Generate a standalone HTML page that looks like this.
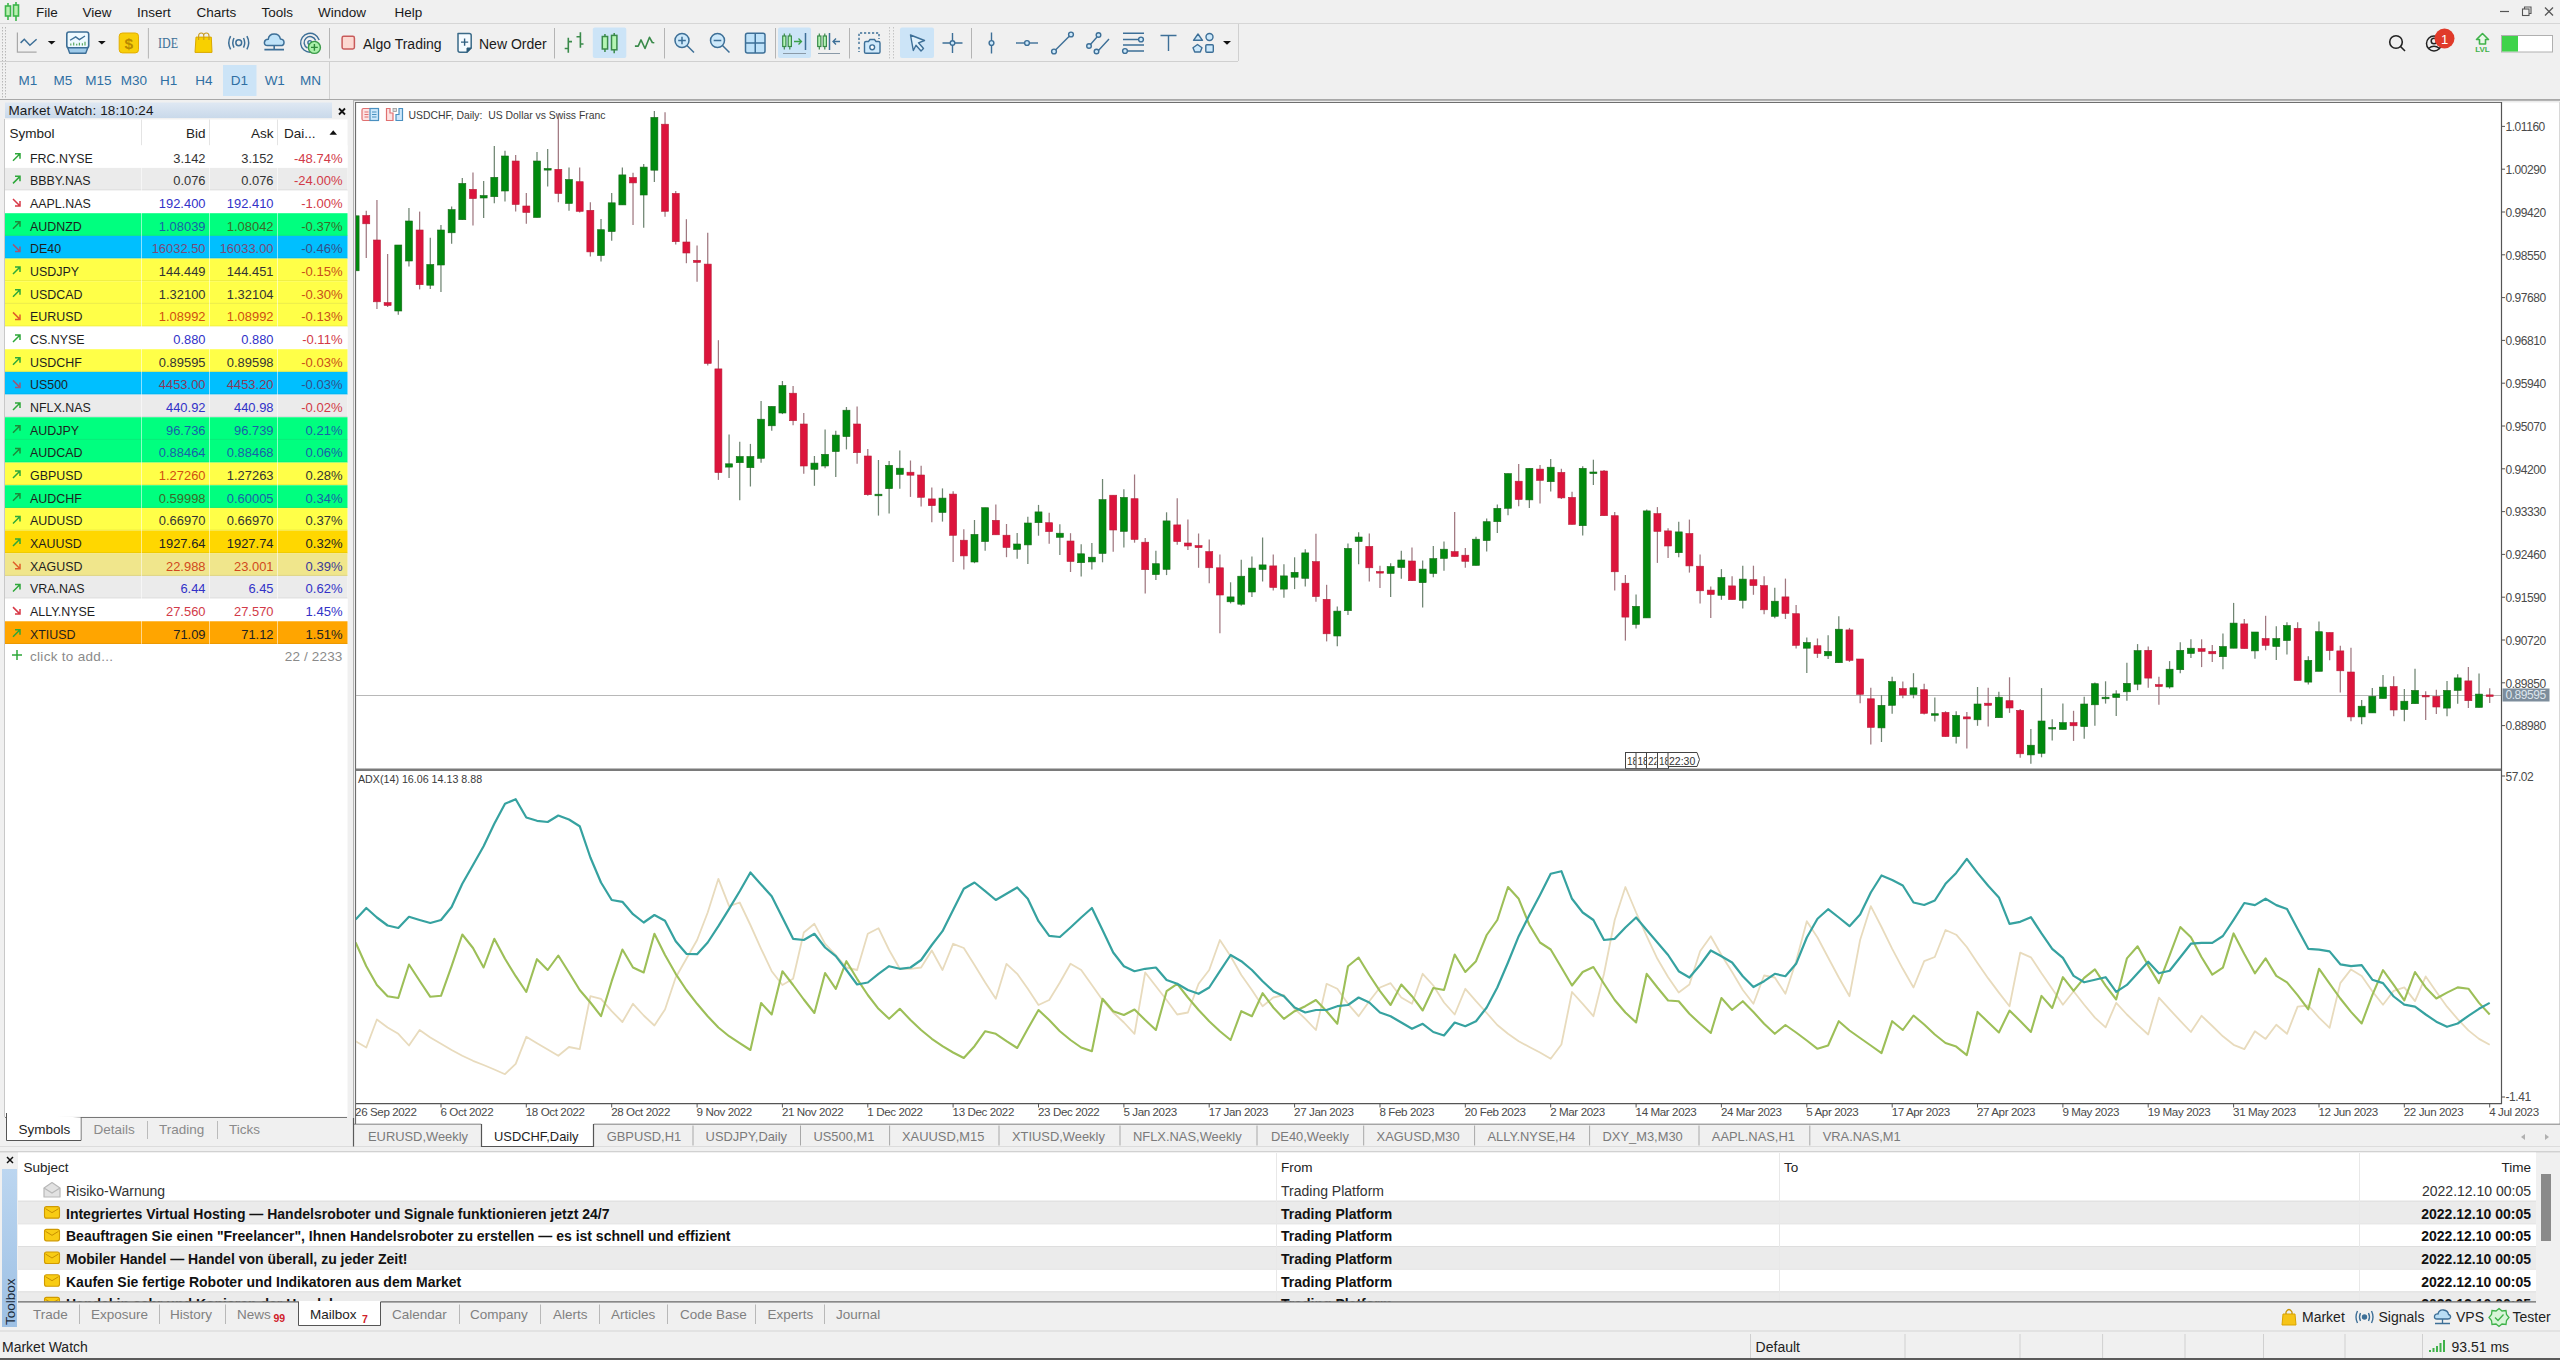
<!DOCTYPE html>
<html><head><meta charset="utf-8"><title>MetaTrader 5</title>
<style>html,body{margin:0;padding:0;background:#f0f0f0;overflow:hidden}svg{display:block}text{font-family:"Liberation Sans",sans-serif}</style>
</head><body><svg width="2560" height="1360" viewBox="0 0 2560 1360" font-family="Liberation Sans, sans-serif"><rect x="0" y="0" width="2560" height="1360" fill="#f0f0f0" /><g stroke="#3cb54a" stroke-width="1.6" fill="#b8f0b0"><line x1="8" y1="3" x2="8" y2="20"/><rect x="5.5" y="6" width="5" height="10"/><line x1="16" y1="2" x2="16" y2="21"/><rect x="13.5" y="5" width="5" height="11"/></g><text x="36" y="16.5" font-size="13.5" fill="#1a1a1a" text-anchor="start" font-weight="normal" >File</text><text x="82.5" y="16.5" font-size="13.5" fill="#1a1a1a" text-anchor="start" font-weight="normal" >View</text><text x="137" y="16.5" font-size="13.5" fill="#1a1a1a" text-anchor="start" font-weight="normal" >Insert</text><text x="196.5" y="16.5" font-size="13.5" fill="#1a1a1a" text-anchor="start" font-weight="normal" >Charts</text><text x="261.5" y="16.5" font-size="13.5" fill="#1a1a1a" text-anchor="start" font-weight="normal" >Tools</text><text x="318" y="16.5" font-size="13.5" fill="#1a1a1a" text-anchor="start" font-weight="normal" >Window</text><text x="394.5" y="16.5" font-size="13.5" fill="#1a1a1a" text-anchor="start" font-weight="normal" >Help</text><line x1="2500" y1="11.5" x2="2509" y2="11.5" stroke="#555" stroke-width="1.2" /><g fill="none" stroke="#555" stroke-width="1.1"><rect x="2522.5" y="9" width="6.5" height="6.5"/><path d="M2524.5 9 V7 H2531 V13.5 H2529"/></g><g stroke="#555" stroke-width="1.2"><line x1="2545" y1="7.5" x2="2553" y2="15.5"/><line x1="2553" y1="7.5" x2="2545" y2="15.5"/></g><line x1="0" y1="23.5" x2="2560" y2="23.5" stroke="#d6d6d6" stroke-width="1" /><rect x="2" y="27" width="1" height="1.5" fill="#b8b8b8" /><rect x="5" y="27" width="1" height="1.5" fill="#b8b8b8" /><rect x="2" y="30" width="1" height="1.5" fill="#b8b8b8" /><rect x="5" y="30" width="1" height="1.5" fill="#b8b8b8" /><rect x="2" y="33" width="1" height="1.5" fill="#b8b8b8" /><rect x="5" y="33" width="1" height="1.5" fill="#b8b8b8" /><rect x="2" y="36" width="1" height="1.5" fill="#b8b8b8" /><rect x="5" y="36" width="1" height="1.5" fill="#b8b8b8" /><rect x="2" y="39" width="1" height="1.5" fill="#b8b8b8" /><rect x="5" y="39" width="1" height="1.5" fill="#b8b8b8" /><rect x="2" y="42" width="1" height="1.5" fill="#b8b8b8" /><rect x="5" y="42" width="1" height="1.5" fill="#b8b8b8" /><rect x="2" y="45" width="1" height="1.5" fill="#b8b8b8" /><rect x="5" y="45" width="1" height="1.5" fill="#b8b8b8" /><rect x="2" y="48" width="1" height="1.5" fill="#b8b8b8" /><rect x="5" y="48" width="1" height="1.5" fill="#b8b8b8" /><rect x="2" y="51" width="1" height="1.5" fill="#b8b8b8" /><rect x="5" y="51" width="1" height="1.5" fill="#b8b8b8" /><rect x="2" y="54" width="1" height="1.5" fill="#b8b8b8" /><rect x="5" y="54" width="1" height="1.5" fill="#b8b8b8" /><rect x="2" y="57" width="1" height="1.5" fill="#b8b8b8" /><rect x="5" y="57" width="1" height="1.5" fill="#b8b8b8" /><rect x="2" y="60" width="1" height="1.5" fill="#b8b8b8" /><rect x="5" y="60" width="1" height="1.5" fill="#b8b8b8" /><rect x="2" y="63" width="1" height="1.5" fill="#b8b8b8" /><rect x="5" y="63" width="1" height="1.5" fill="#b8b8b8" /><rect x="2" y="66" width="1" height="1.5" fill="#b8b8b8" /><rect x="5" y="66" width="1" height="1.5" fill="#b8b8b8" /><rect x="2" y="69" width="1" height="1.5" fill="#b8b8b8" /><rect x="5" y="69" width="1" height="1.5" fill="#b8b8b8" /><rect x="2" y="72" width="1" height="1.5" fill="#b8b8b8" /><rect x="5" y="72" width="1" height="1.5" fill="#b8b8b8" /><rect x="2" y="75" width="1" height="1.5" fill="#b8b8b8" /><rect x="5" y="75" width="1" height="1.5" fill="#b8b8b8" /><rect x="2" y="78" width="1" height="1.5" fill="#b8b8b8" /><rect x="5" y="78" width="1" height="1.5" fill="#b8b8b8" /><rect x="2" y="81" width="1" height="1.5" fill="#b8b8b8" /><rect x="5" y="81" width="1" height="1.5" fill="#b8b8b8" /><rect x="2" y="84" width="1" height="1.5" fill="#b8b8b8" /><rect x="5" y="84" width="1" height="1.5" fill="#b8b8b8" /><rect x="2" y="87" width="1" height="1.5" fill="#b8b8b8" /><rect x="5" y="87" width="1" height="1.5" fill="#b8b8b8" /><rect x="2" y="90" width="1" height="1.5" fill="#b8b8b8" /><rect x="5" y="90" width="1" height="1.5" fill="#b8b8b8" /><rect x="2" y="93" width="1" height="1.5" fill="#b8b8b8" /><rect x="5" y="93" width="1" height="1.5" fill="#b8b8b8" /><rect x="2" y="96" width="1" height="1.5" fill="#b8b8b8" /><rect x="5" y="96" width="1" height="1.5" fill="#b8b8b8" /><line x1="0" y1="61.5" x2="1238" y2="61.5" stroke="#d0d0d0" stroke-width="1" /><line x1="1238.5" y1="24" x2="1238.5" y2="61" stroke="#d0d0d0" stroke-width="1" /><path d="M17.4 32.6 V52.2 H36.6" fill="none" stroke="#a8a8a8" stroke-width="1.2"/><path d="M20.6 42.9 L24.3 39.3 L29.9 45.2 L36.6 39.3" fill="none" stroke="#3d6f97" stroke-width="1.5"/><path d="M47.8 40.9 L55.5 40.9 L51.65 44.4 Z" fill="#111"/><rect x="66.8" y="32" width="21.9" height="15.9" rx="2.2" fill="#eefaff" stroke="#3d6f97" stroke-width="1.6"/><path d="M67.8 47.9 H87.7 L85.8 53.2 H69.7 Z" fill="#9fcbea" stroke="#3d6f97" stroke-width="1.4" stroke-linejoin="round"/><path d="M70.1 40.3 L75.7 36.9 L79.4 39.6 L85 36" fill="none" stroke="#3d6f97" stroke-width="1.3"/><g stroke="#5aa860" stroke-width="1.2"><line x1="70.8" y1="43.5" x2="70.8" y2="45.6"/><line x1="73.7" y1="42.5" x2="73.7" y2="45.6"/><line x1="76.7" y1="43.8" x2="76.7" y2="45.6"/><line x1="79.4" y1="42.8" x2="79.4" y2="45.6"/><line x1="82.4" y1="43.2" x2="82.4" y2="45.6"/><line x1="85" y1="41.8" x2="85" y2="45.6"/></g><path d="M98 40.9 L105.7 40.9 L101.85 44.4 Z" fill="#111"/><rect x="119.2" y="33" width="19.3" height="19.9" rx="3.2" fill="#f8cf0a" stroke="#e3ad00" stroke-width="1"/><text x="128.85" y="48.6" font-size="15.5" fill="#b88a00" text-anchor="middle" font-weight="bold" >$</text><line x1="148.4" y1="28" x2="148.4" y2="58.5" stroke="#b4b4b4" stroke-width="1" /><text x="158" y="47.9" font-size="14.5" fill="#3d6f97" text-anchor="start" font-weight="normal" style="font-family:Liberation Serif" textLength="20" lengthAdjust="spacingAndGlyphs">IDE</text><path d="M196 37.1 H211.3 L212 52.4 H195 Z" fill="#f8d000" stroke="#d9a800" stroke-width="1" stroke-linejoin="round"/><path d="M198.6 40 V36 Q198.6 33 201.3 33 Q203.8 33 203.8 36 V40 M203.6 36 Q203.6 33 206.3 33 Q209 33 209 36 V40" fill="none" stroke="#c89a20" stroke-width="1.1"/><g fill="none" stroke="#3d6f97" stroke-width="1.5"><circle cx="238.75" cy="42.75" r="2.9"/><path d="M234 38 Q231.6 42.75 234 47.6"/><path d="M243.5 38 Q245.9 42.75 243.5 47.6"/><path d="M230.6 36.2 Q227 42.75 230.6 49.4"/><path d="M246.9 36.2 Q250.5 42.75 246.9 49.4"/></g><path d="M267.5 45.6 Q264.2 45.6 264.4 42.4 Q264.8 39.3 268.2 39.3 Q269 34 274.2 34 Q279.6 34 280.4 39 Q284 39.3 284 42.4 Q284 45.6 280.6 45.6 Z" fill="#bfe3f9" stroke="#3d6f97" stroke-width="1.5" stroke-linejoin="round"/><path d="M274.2 45.6 V49.6 M264.4 49.6 H284" fill="none" stroke="#3d6f97" stroke-width="1.6"/><g fill="none" stroke="#3d6f97" stroke-width="1.4"><path d="M319.2 40 A9.5 9.5 0 1 0 310.5 52.3"/><path d="M315.7 40.5 A6 6 0 1 0 307.5 48"/><circle cx="309.8" cy="42.5" r="1.9" fill="#cde9fb"/></g><circle cx="314.4" cy="47.4" r="6" fill="#aaf0aa" stroke="#3a9a48" stroke-width="1.4"/><path d="M314.4 44 V50.8 M311 47.4 H317.8" stroke="#2e8a3a" stroke-width="1.4"/><line x1="329.5" y1="28" x2="329.5" y2="58.5" stroke="#b4b4b4" stroke-width="1" /><rect x="342.1" y="36.3" width="12.3" height="12.6" rx="1.6" fill="#fcd9d2" stroke="#c85a5a" stroke-width="1.5"/><text x="363" y="49" font-size="14" fill="#1a1a1a" text-anchor="start" font-weight="normal" >Algo Trading</text><path d="M458 33.5 H469.2 Q471.2 33.5 471.2 35.5 V48 L467 52.2 H460 Q458 52.2 458 50.2 Z" fill="#f5fbff" stroke="#3a6a88" stroke-width="1.5" stroke-linejoin="round"/><path d="M471.2 48 L467 52.2 V48 Z" fill="#2a5a78" stroke="#2a5a78" stroke-width="1"/><path d="M464.6 38.5 V45.8 M461 42.1 H468.2" stroke="#2f5f80" stroke-width="1.4"/><text x="479" y="49" font-size="14" fill="#1a1a1a" text-anchor="start" font-weight="normal" >New Order</text><line x1="554.5" y1="28" x2="554.5" y2="58.5" stroke="#b4b4b4" stroke-width="1" /><g fill="none" stroke="#3a8a4a" stroke-width="1.6"><path d="M568.3 37.7 V52.8 M564.7 48.5 H568.3 M568.3 41.6 H572"/><path d="M580.4 32.2 V47.7 M576.5 36.7 H580.4 M580.4 44 H583.5"/></g><rect x="592.8" y="27.4" width="33.5" height="30.6" rx="2" fill="#cce4f7"/><g stroke="#3a8a4a" stroke-width="1.5"><line x1="604.95" y1="34" x2="604.95" y2="52"/><line x1="614.2" y1="33" x2="614.2" y2="53.2"/><rect x="602.3" y="36.5" width="5.3" height="12.5" fill="#b4f5b4"/><rect x="611.5" y="35.4" width="5.4" height="14.4" fill="#b4f5b4"/></g><path d="M634.9 46.1 L638.2 46.1 L641 39.9 L645 48.5 L649.5 37.3 L652.3 42.5 L654.3 42.7" fill="none" stroke="#3a8a4a" stroke-width="1.6" stroke-linejoin="round"/><line x1="664.5" y1="28" x2="664.5" y2="58.5" stroke="#b4b4b4" stroke-width="1" /><g stroke="#3d6f97" stroke-width="1.5"><circle cx="682" cy="40.5" r="7" fill="#cde9fb"/><path d="M687 45.5 L694 52.5" fill="none"/><path d="M678.2 40.5 H685.8 M682 36.7 V44.3" fill="none"/></g><g stroke="#3d6f97" stroke-width="1.5"><circle cx="717.5" cy="40.5" r="7" fill="#cde9fb"/><path d="M722.5 45.5 L729.5 52.5" fill="none"/><path d="M713.7 40.5 H721.3" fill="none"/></g><g stroke="#3d6f97" stroke-width="1.5"><rect x="745.5" y="33.3" width="19.5" height="19.7" rx="2" fill="#bfe2f9"/><path d="M755.25 33.3 V53 M745.5 43 H765" fill="none"/></g><line x1="775.5" y1="28" x2="775.5" y2="58.5" stroke="#b4b4b4" stroke-width="1" /><rect x="778" y="27.4" width="33" height="30.6" rx="2" fill="#cce4f7"/><g stroke="#3a8a4a" stroke-width="1.2"><line x1="784.3" y1="33.5" x2="784.3" y2="49.5"/><rect x="782.7" y="36" width="3.2" height="10.5" fill="#b4f5b4"/><line x1="789.8" y1="33.5" x2="789.8" y2="49.5"/><rect x="788.2" y="36" width="3.2" height="10.5" fill="#b4f5b4"/></g><g fill="none" stroke="#3aa048" stroke-width="1.3"><path d="M794 41.5 H801.5 M798.5 38.5 L801.5 41.5 L798.5 44.5"/></g><line x1="805.5" y1="33" x2="805.5" y2="50" stroke="#3d6f97" stroke-width="1.5"/><line x1="783" y1="53.5" x2="806" y2="53.5" stroke="#8a9aa8" stroke-width="1"/><g stroke="#3a8a4a" stroke-width="1.2"><line x1="819.3" y1="33.5" x2="819.3" y2="49.5"/><rect x="817.7" y="36" width="3.2" height="10.5" fill="#b4f5b4"/><line x1="824.8" y1="33.5" x2="824.8" y2="49.5"/><rect x="823.2" y="36" width="3.2" height="10.5" fill="#b4f5b4"/></g><line x1="829.5" y1="33" x2="829.5" y2="50" stroke="#3d6f97" stroke-width="1.5"/><path d="M840 41.5 H833 M836 38.5 L833 41.5 L836 44.5" fill="none" stroke="#3d6f97" stroke-width="1.3"/><line x1="818" y1="53.5" x2="840" y2="53.5" stroke="#8a9aa8" stroke-width="1"/><line x1="849.5" y1="28" x2="849.5" y2="58.5" stroke="#b4b4b4" stroke-width="1" /><g fill="none" stroke="#3d6f97" stroke-width="1.4"><path d="M859 44 V33 H879 V39" stroke-dasharray="2.2 1.8"/><path d="M859 47 V52" stroke-dasharray="2.2 1.8"/></g><path d="M864.5 43 Q864.5 41.5 866 41.5 H868.5 L870 39.5 H874.5 L876 41.5 H878.5 Q880 41.5 880 43 V52 Q880 53.3 878.5 53.3 H866 Q864.5 53.3 864.5 52 Z" fill="#cfe9fb" stroke="#3d6f97" stroke-width="1.4"/><circle cx="872.2" cy="47.3" r="2.4" fill="#fff" stroke="#3d6f97" stroke-width="1.4"/><rect x="889" y="27" width="1" height="1.5" fill="#c4c4c4" /><rect x="893" y="27" width="1" height="1.5" fill="#c4c4c4" /><rect x="889" y="30" width="1" height="1.5" fill="#c4c4c4" /><rect x="893" y="30" width="1" height="1.5" fill="#c4c4c4" /><rect x="889" y="33" width="1" height="1.5" fill="#c4c4c4" /><rect x="893" y="33" width="1" height="1.5" fill="#c4c4c4" /><rect x="889" y="36" width="1" height="1.5" fill="#c4c4c4" /><rect x="893" y="36" width="1" height="1.5" fill="#c4c4c4" /><rect x="889" y="39" width="1" height="1.5" fill="#c4c4c4" /><rect x="893" y="39" width="1" height="1.5" fill="#c4c4c4" /><rect x="889" y="42" width="1" height="1.5" fill="#c4c4c4" /><rect x="893" y="42" width="1" height="1.5" fill="#c4c4c4" /><rect x="889" y="45" width="1" height="1.5" fill="#c4c4c4" /><rect x="893" y="45" width="1" height="1.5" fill="#c4c4c4" /><rect x="889" y="48" width="1" height="1.5" fill="#c4c4c4" /><rect x="893" y="48" width="1" height="1.5" fill="#c4c4c4" /><rect x="889" y="51" width="1" height="1.5" fill="#c4c4c4" /><rect x="893" y="51" width="1" height="1.5" fill="#c4c4c4" /><rect x="889" y="54" width="1" height="1.5" fill="#c4c4c4" /><rect x="893" y="54" width="1" height="1.5" fill="#c4c4c4" /><rect x="889" y="57" width="1" height="1.5" fill="#c4c4c4" /><rect x="893" y="57" width="1" height="1.5" fill="#c4c4c4" /><rect x="900" y="27.4" width="34" height="30.6" rx="2" fill="#cce4f7"/><path d="M910.5 35 L924.5 40.5 L918.5 42.8 L923.5 48.5 L921 51 L916 45.3 L913.3 50.5 Z" fill="#dff0fb" stroke="#3d6f97" stroke-width="1.4" stroke-linejoin="round"/><g stroke="#3d6f97" stroke-width="1.4"><path d="M952.5 33 V53 M942.5 43 H962.5" fill="none"/><circle cx="952.5" cy="43" r="2.3" fill="#cde9fb"/></g><line x1="971.5" y1="28" x2="971.5" y2="58.5" stroke="#b4b4b4" stroke-width="1" /><g stroke="#3d6f97" stroke-width="1.4"><path d="M991.5 32.5 V53.5" fill="none"/><circle cx="991.5" cy="43" r="2.4" fill="#cde9fb"/></g><g stroke="#3d6f97" stroke-width="1.4"><path d="M1016 43 H1038" fill="none"/><circle cx="1027" cy="43" r="2.4" fill="#cde9fb"/></g><g stroke="#3d6f97" stroke-width="1.4"><path d="M1055 50.5 L1069.5 36" fill="none"/><circle cx="1054" cy="51.5" r="2.4" fill="#cde9fb"/><circle cx="1071" cy="34.5" r="2.4" fill="#cde9fb"/></g><g stroke="#3d6f97" stroke-width="1.4"><path d="M1090 45 L1097 37 M1098 51 L1109 39" fill="none"/><circle cx="1089" cy="46" r="2.3" fill="#cde9fb"/><circle cx="1098.5" cy="35" r="2.3" fill="#cde9fb"/><circle cx="1096.5" cy="51.5" r="2.3" fill="#cde9fb"/></g><g stroke="#3d6f97" stroke-width="1.4"><path d="M1123 33.3 H1144 M1123 39.5 H1139 M1123 45 H1144 M1127 51 H1144" fill="none"/><circle cx="1141" cy="39.5" r="2.4" fill="#cde9fb"/><circle cx="1125" cy="51" r="2.4" fill="#cde9fb"/></g><path d="M1160.5 35.5 H1176.5 M1168.5 35.5 V51" fill="none" stroke="#3d6f97" stroke-width="1.4"/><g stroke="#3d6f97" stroke-width="1.4" fill="#cde9fb" stroke-linejoin="round"><path d="M1198 34 L1202.5 40.3 H1193.5 Z"/><circle cx="1209.5" cy="37" r="3.5"/><path d="M1197.5 44.5 L1202 47.8 L1200.3 52 H1194.7 L1193 47.8 Z"/><rect x="1205.8" y="44.8" width="7.5" height="7.5" rx="1"/></g><path d="M1223 41 L1231 41 L1227 44.8 Z" fill="#111"/><g fill="none" stroke="#222" stroke-width="1.6"><circle cx="2396" cy="42" r="6.3"/><path d="M2400.5 46.5 L2405 51"/></g><g fill="none" stroke="#222" stroke-width="1.5"><circle cx="2434" cy="43.5" r="7.5"/><circle cx="2434" cy="41" r="2.8"/><path d="M2428.5 48.5 Q2434 44 2439.5 48.5"/></g><circle cx="2444.5" cy="38.5" r="10" fill="#e03a2a"/><text x="2444.5" y="44" font-size="13" fill="#fff" text-anchor="middle" font-weight="normal" >1</text><path d="M2482.5 33.5 L2488.5 39.5 H2485.5 V44 H2479.5 V39.5 H2476.5 Z" fill="#e8f8e8" stroke="#3fb24a" stroke-width="1.6" stroke-linejoin="round"/><text x="2482.5" y="52" font-size="8" fill="#3fb24a" text-anchor="middle" font-weight="bold" >LVL</text><rect x="2501.5" y="35.5" width="51" height="16.5" fill="#ffffff" stroke="#b0b0b0" stroke-width="1"/><rect x="2502" y="36" width="16" height="15.5" fill="#3fd34a" /><rect x="223" y="65" width="33.5" height="31" fill="#cce4f7" /><text x="28" y="85.3" font-size="13.5" fill="#2f6fa3" text-anchor="middle" font-weight="normal" >M1</text><text x="63" y="85.3" font-size="13.5" fill="#2f6fa3" text-anchor="middle" font-weight="normal" >M5</text><text x="98.5" y="85.3" font-size="13.5" fill="#2f6fa3" text-anchor="middle" font-weight="normal" >M15</text><text x="134" y="85.3" font-size="13.5" fill="#2f6fa3" text-anchor="middle" font-weight="normal" >M30</text><text x="168.75" y="85.3" font-size="13.5" fill="#2f6fa3" text-anchor="middle" font-weight="normal" >H1</text><text x="204" y="85.3" font-size="13.5" fill="#2f6fa3" text-anchor="middle" font-weight="normal" >H4</text><text x="239.5" y="85.3" font-size="13.5" fill="#2f6fa3" text-anchor="middle" font-weight="normal" >D1</text><text x="274.75" y="85.3" font-size="13.5" fill="#2f6fa3" text-anchor="middle" font-weight="normal" >W1</text><text x="310.5" y="85.3" font-size="13.5" fill="#2f6fa3" text-anchor="middle" font-weight="normal" >MN</text><line x1="329.5" y1="62" x2="329.5" y2="99" stroke="#d0d0d0" stroke-width="1" /><line x1="0" y1="99.5" x2="2560" y2="99.5" stroke="#a8a8a8" stroke-width="1.2" /><defs><linearGradient id="mwh" x1="0" y1="0" x2="0" y2="1"><stop offset="0" stop-color="#dfe8f3"/><stop offset="1" stop-color="#c9d9ea"/></linearGradient></defs><rect x="5" y="102.5" width="327" height="15.5" fill="url(#mwh)" /><text x="8.5" y="114.6" font-size="13.5" fill="#1a1a1a" text-anchor="start" font-weight="normal" letter-spacing="0.1" >Market Watch: 18:10:24</text><g stroke="#111" stroke-width="1.8"><line x1="339" y1="108.5" x2="345" y2="114.5"/><line x1="345" y1="108.5" x2="339" y2="114.5"/></g><rect x="5" y="119.5" width="342.5" height="997" fill="#ffffff" /><line x1="4.5" y1="119" x2="4.5" y2="1117" stroke="#c8c8c8" stroke-width="1" /><text x="9.5" y="137.8" font-size="13.5" fill="#222" text-anchor="start" font-weight="normal" >Symbol</text><text x="205.5" y="137.8" font-size="13.5" fill="#222" text-anchor="end" font-weight="normal" >Bid</text><text x="273.5" y="137.8" font-size="13.5" fill="#222" text-anchor="end" font-weight="normal" >Ask</text><text x="284" y="137.8" font-size="13.5" fill="#222" text-anchor="start" font-weight="normal" >Dai...</text><path d="M329.5 134.8 L337 134.8 L333.25 130.3 Z" fill="#111"/><rect x="5" y="145.2" width="342.5" height="22.72" fill="#ffffff" /><path d="M13 160.7 L20 153.7 M15 153.7 H20 V158.7" fill="none" stroke="#2ea83a" stroke-width="1.5"/><text x="30" y="162.7" font-size="13.5" fill="#1e1e1e" text-anchor="start" font-weight="normal" textLength="62.79" lengthAdjust="spacingAndGlyphs" >FRC.NYSE</text><text x="205.5" y="162.7" font-size="13.5" fill="#333" text-anchor="end" font-weight="normal" textLength="32.29" lengthAdjust="spacingAndGlyphs" >3.142</text><text x="273.5" y="162.7" font-size="13.5" fill="#333" text-anchor="end" font-weight="normal" textLength="32.29" lengthAdjust="spacingAndGlyphs" >3.152</text><text x="342.5" y="162.7" font-size="13.5" fill="#d23a48" text-anchor="end" font-weight="normal" textLength="48.55" lengthAdjust="spacingAndGlyphs" >-48.74%</text><rect x="5" y="167.87" width="342.5" height="22.72" fill="#ebebeb" /><line x1="5" y1="190.04" x2="347.5" y2="190.04" stroke="#000000" stroke-width="1" opacity="0.07"/><path d="M13 183.37 L20 176.37 M15 176.37 H20 V181.37" fill="none" stroke="#2ea83a" stroke-width="1.5"/><text x="30" y="185.37" font-size="13.5" fill="#1e1e1e" text-anchor="start" font-weight="normal" textLength="60.50" lengthAdjust="spacingAndGlyphs" >BBBY.NAS</text><text x="205.5" y="185.37" font-size="13.5" fill="#333" text-anchor="end" font-weight="normal" textLength="32.29" lengthAdjust="spacingAndGlyphs" >0.076</text><text x="273.5" y="185.37" font-size="13.5" fill="#333" text-anchor="end" font-weight="normal" textLength="32.29" lengthAdjust="spacingAndGlyphs" >0.076</text><text x="342.5" y="185.37" font-size="13.5" fill="#d23a48" text-anchor="end" font-weight="normal" textLength="48.55" lengthAdjust="spacingAndGlyphs" >-24.00%</text><rect x="5" y="190.54" width="342.5" height="22.72" fill="#ffffff" /><path d="M13 199.04 L20 206.04 M15 206.04 H20 V201.04" fill="none" stroke="#d83a48" stroke-width="1.5"/><text x="30" y="208.04" font-size="13.5" fill="#1e1e1e" text-anchor="start" font-weight="normal" textLength="60.73" lengthAdjust="spacingAndGlyphs" >AAPL.NAS</text><text x="205.5" y="208.04" font-size="13.5" fill="#3232c8" text-anchor="end" font-weight="normal" textLength="46.65" lengthAdjust="spacingAndGlyphs" >192.400</text><text x="273.5" y="208.04" font-size="13.5" fill="#3232c8" text-anchor="end" font-weight="normal" textLength="46.65" lengthAdjust="spacingAndGlyphs" >192.410</text><text x="342.5" y="208.04" font-size="13.5" fill="#d23a48" text-anchor="end" font-weight="normal" textLength="41.30" lengthAdjust="spacingAndGlyphs" >-1.00%</text><rect x="5" y="213.21" width="342.5" height="22.72" fill="#00ff7f" /><line x1="5" y1="235.38" x2="347.5" y2="235.38" stroke="#000000" stroke-width="1" opacity="0.07"/><path d="M13 228.70999999999998 L20 221.70999999999998 M15 221.70999999999998 H20 V226.70999999999998" fill="none" stroke="#1e8a3a" stroke-width="1.5"/><text x="30" y="230.71" font-size="13.5" fill="#1e1e1e" text-anchor="start" font-weight="normal" textLength="51.75" lengthAdjust="spacingAndGlyphs" >AUDNZD</text><text x="205.5" y="230.71" font-size="13.5" fill="#1a5fa8" text-anchor="end" font-weight="normal" textLength="46.65" lengthAdjust="spacingAndGlyphs" >1.08039</text><text x="273.5" y="230.71" font-size="13.5" fill="#3c6a28" text-anchor="end" font-weight="normal" textLength="46.65" lengthAdjust="spacingAndGlyphs" >1.08042</text><text x="342.5" y="230.71" font-size="13.5" fill="#3c6a28" text-anchor="end" font-weight="normal" textLength="41.30" lengthAdjust="spacingAndGlyphs" >-0.37%</text><rect x="5" y="235.88" width="342.5" height="22.72" fill="#00bfff" /><line x1="5" y1="258.05" x2="347.5" y2="258.05" stroke="#000000" stroke-width="1" opacity="0.07"/><path d="M13 244.38 L20 251.38 M15 251.38 H20 V246.38" fill="none" stroke="#9a5a7a" stroke-width="1.5"/><text x="30" y="253.38" font-size="13.5" fill="#1e1e1e" text-anchor="start" font-weight="normal" textLength="31.08" lengthAdjust="spacingAndGlyphs" >DE40</text><text x="205.5" y="253.38" font-size="13.5" fill="#7a4a78" text-anchor="end" font-weight="normal" textLength="53.82" lengthAdjust="spacingAndGlyphs" >16032.50</text><text x="273.5" y="253.38" font-size="13.5" fill="#7a4a78" text-anchor="end" font-weight="normal" textLength="53.82" lengthAdjust="spacingAndGlyphs" >16033.00</text><text x="342.5" y="253.38" font-size="13.5" fill="#34508a" text-anchor="end" font-weight="normal" textLength="41.30" lengthAdjust="spacingAndGlyphs" >-0.46%</text><rect x="5" y="258.55" width="342.5" height="22.72" fill="#ffff48" /><line x1="5" y1="280.72" x2="347.5" y2="280.72" stroke="#000000" stroke-width="1" opacity="0.07"/><path d="M13 274.05 L20 267.05 M15 267.05 H20 V272.05" fill="none" stroke="#2ea83a" stroke-width="1.5"/><text x="30" y="276.05" font-size="13.5" fill="#1e1e1e" text-anchor="start" font-weight="normal" textLength="48.99" lengthAdjust="spacingAndGlyphs" >USDJPY</text><text x="205.5" y="276.05" font-size="13.5" fill="#333" text-anchor="end" font-weight="normal" textLength="46.65" lengthAdjust="spacingAndGlyphs" >144.449</text><text x="273.5" y="276.05" font-size="13.5" fill="#333" text-anchor="end" font-weight="normal" textLength="46.65" lengthAdjust="spacingAndGlyphs" >144.451</text><text x="342.5" y="276.05" font-size="13.5" fill="#c8501a" text-anchor="end" font-weight="normal" textLength="41.30" lengthAdjust="spacingAndGlyphs" >-0.15%</text><rect x="5" y="281.22" width="342.5" height="22.72" fill="#ffff48" /><line x1="5" y1="303.39" x2="347.5" y2="303.39" stroke="#000000" stroke-width="1" opacity="0.07"/><path d="M13 296.72 L20 289.72 M15 289.72 H20 V294.72" fill="none" stroke="#2ea83a" stroke-width="1.5"/><text x="30" y="298.72" font-size="13.5" fill="#1e1e1e" text-anchor="start" font-weight="normal" textLength="52.44" lengthAdjust="spacingAndGlyphs" >USDCAD</text><text x="205.5" y="298.72" font-size="13.5" fill="#333" text-anchor="end" font-weight="normal" textLength="46.65" lengthAdjust="spacingAndGlyphs" >1.32100</text><text x="273.5" y="298.72" font-size="13.5" fill="#333" text-anchor="end" font-weight="normal" textLength="46.65" lengthAdjust="spacingAndGlyphs" >1.32104</text><text x="342.5" y="298.72" font-size="13.5" fill="#c8501a" text-anchor="end" font-weight="normal" textLength="41.30" lengthAdjust="spacingAndGlyphs" >-0.30%</text><rect x="5" y="303.89" width="342.5" height="22.72" fill="#ffff48" /><line x1="5" y1="326.06" x2="347.5" y2="326.06" stroke="#000000" stroke-width="1" opacity="0.07"/><path d="M13 312.39 L20 319.39 M15 319.39 H20 V314.39" fill="none" stroke="#e0602a" stroke-width="1.5"/><text x="30" y="321.39" font-size="13.5" fill="#1e1e1e" text-anchor="start" font-weight="normal" textLength="52.44" lengthAdjust="spacingAndGlyphs" >EURUSD</text><text x="205.5" y="321.39" font-size="13.5" fill="#d05010" text-anchor="end" font-weight="normal" textLength="46.65" lengthAdjust="spacingAndGlyphs" >1.08992</text><text x="273.5" y="321.39" font-size="13.5" fill="#d05010" text-anchor="end" font-weight="normal" textLength="46.65" lengthAdjust="spacingAndGlyphs" >1.08992</text><text x="342.5" y="321.39" font-size="13.5" fill="#c8501a" text-anchor="end" font-weight="normal" textLength="41.30" lengthAdjust="spacingAndGlyphs" >-0.13%</text><rect x="5" y="326.56" width="342.5" height="22.72" fill="#ffffff" /><path d="M13 342.06 L20 335.06 M15 335.06 H20 V340.06" fill="none" stroke="#2ea83a" stroke-width="1.5"/><text x="30" y="344.06" font-size="13.5" fill="#1e1e1e" text-anchor="start" font-weight="normal" textLength="54.51" lengthAdjust="spacingAndGlyphs" >CS.NYSE</text><text x="205.5" y="344.06" font-size="13.5" fill="#3232c8" text-anchor="end" font-weight="normal" textLength="32.29" lengthAdjust="spacingAndGlyphs" >0.880</text><text x="273.5" y="344.06" font-size="13.5" fill="#3232c8" text-anchor="end" font-weight="normal" textLength="32.29" lengthAdjust="spacingAndGlyphs" >0.880</text><text x="342.5" y="344.06" font-size="13.5" fill="#d23a48" text-anchor="end" font-weight="normal" textLength="40.33" lengthAdjust="spacingAndGlyphs" >-0.11%</text><rect x="5" y="349.23" width="342.5" height="22.72" fill="#ffff48" /><line x1="5" y1="371.4" x2="347.5" y2="371.4" stroke="#000000" stroke-width="1" opacity="0.07"/><path d="M13 364.73 L20 357.73 M15 357.73 H20 V362.73" fill="none" stroke="#2ea83a" stroke-width="1.5"/><text x="30" y="366.73" font-size="13.5" fill="#1e1e1e" text-anchor="start" font-weight="normal" textLength="51.75" lengthAdjust="spacingAndGlyphs" >USDCHF</text><text x="205.5" y="366.73" font-size="13.5" fill="#333" text-anchor="end" font-weight="normal" textLength="46.65" lengthAdjust="spacingAndGlyphs" >0.89595</text><text x="273.5" y="366.73" font-size="13.5" fill="#333" text-anchor="end" font-weight="normal" textLength="46.65" lengthAdjust="spacingAndGlyphs" >0.89598</text><text x="342.5" y="366.73" font-size="13.5" fill="#c8501a" text-anchor="end" font-weight="normal" textLength="41.30" lengthAdjust="spacingAndGlyphs" >-0.03%</text><rect x="5" y="371.9" width="342.5" height="22.72" fill="#00bfff" /><line x1="5" y1="394.07" x2="347.5" y2="394.07" stroke="#000000" stroke-width="1" opacity="0.07"/><path d="M13 380.4 L20 387.4 M15 387.4 H20 V382.4" fill="none" stroke="#9a5a7a" stroke-width="1.5"/><text x="30" y="389.4" font-size="13.5" fill="#1e1e1e" text-anchor="start" font-weight="normal" textLength="37.99" lengthAdjust="spacingAndGlyphs" >US500</text><text x="205.5" y="389.4" font-size="13.5" fill="#8a3a5a" text-anchor="end" font-weight="normal" textLength="46.65" lengthAdjust="spacingAndGlyphs" >4453.00</text><text x="273.5" y="389.4" font-size="13.5" fill="#8a3a5a" text-anchor="end" font-weight="normal" textLength="46.65" lengthAdjust="spacingAndGlyphs" >4453.20</text><text x="342.5" y="389.4" font-size="13.5" fill="#34508a" text-anchor="end" font-weight="normal" textLength="41.30" lengthAdjust="spacingAndGlyphs" >-0.03%</text><rect x="5" y="394.57" width="342.5" height="22.72" fill="#ebebeb" /><line x1="5" y1="416.74" x2="347.5" y2="416.74" stroke="#000000" stroke-width="1" opacity="0.07"/><path d="M13 410.07 L20 403.07 M15 403.07 H20 V408.07" fill="none" stroke="#2ea83a" stroke-width="1.5"/><text x="30" y="412.07" font-size="13.5" fill="#1e1e1e" text-anchor="start" font-weight="normal" textLength="60.73" lengthAdjust="spacingAndGlyphs" >NFLX.NAS</text><text x="205.5" y="412.07" font-size="13.5" fill="#3232c8" text-anchor="end" font-weight="normal" textLength="39.47" lengthAdjust="spacingAndGlyphs" >440.92</text><text x="273.5" y="412.07" font-size="13.5" fill="#3232c8" text-anchor="end" font-weight="normal" textLength="39.47" lengthAdjust="spacingAndGlyphs" >440.98</text><text x="342.5" y="412.07" font-size="13.5" fill="#d23a48" text-anchor="end" font-weight="normal" textLength="41.30" lengthAdjust="spacingAndGlyphs" >-0.02%</text><rect x="5" y="417.24" width="342.5" height="22.72" fill="#00ff7f" /><line x1="5" y1="439.41" x2="347.5" y2="439.41" stroke="#000000" stroke-width="1" opacity="0.07"/><path d="M13 432.74 L20 425.74 M15 425.74 H20 V430.74" fill="none" stroke="#1e8a3a" stroke-width="1.5"/><text x="30" y="434.74" font-size="13.5" fill="#1e1e1e" text-anchor="start" font-weight="normal" textLength="48.99" lengthAdjust="spacingAndGlyphs" >AUDJPY</text><text x="205.5" y="434.74" font-size="13.5" fill="#1a5fa8" text-anchor="end" font-weight="normal" textLength="39.47" lengthAdjust="spacingAndGlyphs" >96.736</text><text x="273.5" y="434.74" font-size="13.5" fill="#1a5fa8" text-anchor="end" font-weight="normal" textLength="39.47" lengthAdjust="spacingAndGlyphs" >96.739</text><text x="342.5" y="434.74" font-size="13.5" fill="#1a5fa8" text-anchor="end" font-weight="normal" textLength="36.96" lengthAdjust="spacingAndGlyphs" >0.21%</text><rect x="5" y="439.91" width="342.5" height="22.72" fill="#00ff7f" /><line x1="5" y1="462.08" x2="347.5" y2="462.08" stroke="#000000" stroke-width="1" opacity="0.07"/><path d="M13 455.41 L20 448.41 M15 448.41 H20 V453.41" fill="none" stroke="#1e8a3a" stroke-width="1.5"/><text x="30" y="457.41" font-size="13.5" fill="#1e1e1e" text-anchor="start" font-weight="normal" textLength="52.44" lengthAdjust="spacingAndGlyphs" >AUDCAD</text><text x="205.5" y="457.41" font-size="13.5" fill="#1a5fa8" text-anchor="end" font-weight="normal" textLength="46.65" lengthAdjust="spacingAndGlyphs" >0.88464</text><text x="273.5" y="457.41" font-size="13.5" fill="#1a5fa8" text-anchor="end" font-weight="normal" textLength="46.65" lengthAdjust="spacingAndGlyphs" >0.88468</text><text x="342.5" y="457.41" font-size="13.5" fill="#1a5fa8" text-anchor="end" font-weight="normal" textLength="36.96" lengthAdjust="spacingAndGlyphs" >0.06%</text><rect x="5" y="462.58" width="342.5" height="22.72" fill="#ffff48" /><line x1="5" y1="484.75" x2="347.5" y2="484.75" stroke="#000000" stroke-width="1" opacity="0.07"/><path d="M13 478.08 L20 471.08 M15 471.08 H20 V476.08" fill="none" stroke="#2ea83a" stroke-width="1.5"/><text x="30" y="480.08" font-size="13.5" fill="#1e1e1e" text-anchor="start" font-weight="normal" textLength="52.44" lengthAdjust="spacingAndGlyphs" >GBPUSD</text><text x="205.5" y="480.08" font-size="13.5" fill="#d05010" text-anchor="end" font-weight="normal" textLength="46.65" lengthAdjust="spacingAndGlyphs" >1.27260</text><text x="273.5" y="480.08" font-size="13.5" fill="#333" text-anchor="end" font-weight="normal" textLength="46.65" lengthAdjust="spacingAndGlyphs" >1.27263</text><text x="342.5" y="480.08" font-size="13.5" fill="#333" text-anchor="end" font-weight="normal" textLength="36.96" lengthAdjust="spacingAndGlyphs" >0.28%</text><rect x="5" y="485.25" width="342.5" height="22.72" fill="#00ff7f" /><line x1="5" y1="507.42" x2="347.5" y2="507.42" stroke="#000000" stroke-width="1" opacity="0.07"/><path d="M13 500.75 L20 493.75 M15 493.75 H20 V498.75" fill="none" stroke="#1e8a3a" stroke-width="1.5"/><text x="30" y="502.75" font-size="13.5" fill="#1e1e1e" text-anchor="start" font-weight="normal" textLength="51.75" lengthAdjust="spacingAndGlyphs" >AUDCHF</text><text x="205.5" y="502.75" font-size="13.5" fill="#3c6a28" text-anchor="end" font-weight="normal" textLength="46.65" lengthAdjust="spacingAndGlyphs" >0.59998</text><text x="273.5" y="502.75" font-size="13.5" fill="#1a5fa8" text-anchor="end" font-weight="normal" textLength="46.65" lengthAdjust="spacingAndGlyphs" >0.60005</text><text x="342.5" y="502.75" font-size="13.5" fill="#1a5fa8" text-anchor="end" font-weight="normal" textLength="36.96" lengthAdjust="spacingAndGlyphs" >0.34%</text><rect x="5" y="507.92" width="342.5" height="22.72" fill="#ffff48" /><line x1="5" y1="530.09" x2="347.5" y2="530.09" stroke="#000000" stroke-width="1" opacity="0.07"/><path d="M13 523.4200000000001 L20 516.4200000000001 M15 516.4200000000001 H20 V521.4200000000001" fill="none" stroke="#2ea83a" stroke-width="1.5"/><text x="30" y="525.42" font-size="13.5" fill="#1e1e1e" text-anchor="start" font-weight="normal" textLength="52.44" lengthAdjust="spacingAndGlyphs" >AUDUSD</text><text x="205.5" y="525.42" font-size="13.5" fill="#333" text-anchor="end" font-weight="normal" textLength="46.65" lengthAdjust="spacingAndGlyphs" >0.66970</text><text x="273.5" y="525.42" font-size="13.5" fill="#333" text-anchor="end" font-weight="normal" textLength="46.65" lengthAdjust="spacingAndGlyphs" >0.66970</text><text x="342.5" y="525.42" font-size="13.5" fill="#333" text-anchor="end" font-weight="normal" textLength="36.96" lengthAdjust="spacingAndGlyphs" >0.37%</text><rect x="5" y="530.59" width="342.5" height="22.72" fill="#ffd700" /><line x1="5" y1="552.76" x2="347.5" y2="552.76" stroke="#000000" stroke-width="1" opacity="0.07"/><path d="M13 546.09 L20 539.09 M15 539.09 H20 V544.09" fill="none" stroke="#2ea83a" stroke-width="1.5"/><text x="30" y="548.09" font-size="13.5" fill="#1e1e1e" text-anchor="start" font-weight="normal" textLength="51.75" lengthAdjust="spacingAndGlyphs" >XAUUSD</text><text x="205.5" y="548.09" font-size="13.5" fill="#222" text-anchor="end" font-weight="normal" textLength="46.65" lengthAdjust="spacingAndGlyphs" >1927.64</text><text x="273.5" y="548.09" font-size="13.5" fill="#222" text-anchor="end" font-weight="normal" textLength="46.65" lengthAdjust="spacingAndGlyphs" >1927.74</text><text x="342.5" y="548.09" font-size="13.5" fill="#222" text-anchor="end" font-weight="normal" textLength="36.96" lengthAdjust="spacingAndGlyphs" >0.32%</text><rect x="5" y="553.26" width="342.5" height="22.72" fill="#f0e68c" /><line x1="5" y1="575.43" x2="347.5" y2="575.43" stroke="#000000" stroke-width="1" opacity="0.07"/><path d="M13 561.76 L20 568.76 M15 568.76 H20 V563.76" fill="none" stroke="#e0602a" stroke-width="1.5"/><text x="30" y="570.76" font-size="13.5" fill="#1e1e1e" text-anchor="start" font-weight="normal" textLength="52.44" lengthAdjust="spacingAndGlyphs" >XAGUSD</text><text x="205.5" y="570.76" font-size="13.5" fill="#d04a20" text-anchor="end" font-weight="normal" textLength="39.47" lengthAdjust="spacingAndGlyphs" >22.988</text><text x="273.5" y="570.76" font-size="13.5" fill="#d04a20" text-anchor="end" font-weight="normal" textLength="39.47" lengthAdjust="spacingAndGlyphs" >23.001</text><text x="342.5" y="570.76" font-size="13.5" fill="#3a3a9a" text-anchor="end" font-weight="normal" textLength="36.96" lengthAdjust="spacingAndGlyphs" >0.39%</text><rect x="5" y="575.93" width="342.5" height="22.72" fill="#ebebeb" /><line x1="5" y1="598.1" x2="347.5" y2="598.1" stroke="#000000" stroke-width="1" opacity="0.07"/><path d="M13 591.4300000000001 L20 584.4300000000001 M15 584.4300000000001 H20 V589.4300000000001" fill="none" stroke="#2ea83a" stroke-width="1.5"/><text x="30" y="593.43" font-size="13.5" fill="#1e1e1e" text-anchor="start" font-weight="normal" textLength="54.51" lengthAdjust="spacingAndGlyphs" >VRA.NAS</text><text x="205.5" y="593.43" font-size="13.5" fill="#3232c8" text-anchor="end" font-weight="normal" textLength="25.11" lengthAdjust="spacingAndGlyphs" >6.44</text><text x="273.5" y="593.43" font-size="13.5" fill="#3232c8" text-anchor="end" font-weight="normal" textLength="25.11" lengthAdjust="spacingAndGlyphs" >6.45</text><text x="342.5" y="593.43" font-size="13.5" fill="#3232c8" text-anchor="end" font-weight="normal" textLength="36.96" lengthAdjust="spacingAndGlyphs" >0.62%</text><rect x="5" y="598.6" width="342.5" height="22.72" fill="#ffffff" /><path d="M13 607.1 L20 614.1 M15 614.1 H20 V609.1" fill="none" stroke="#d83a48" stroke-width="1.5"/><text x="30" y="616.1" font-size="13.5" fill="#1e1e1e" text-anchor="start" font-weight="normal" textLength="65.13" lengthAdjust="spacingAndGlyphs" >ALLY.NYSE</text><text x="205.5" y="616.1" font-size="13.5" fill="#d23a48" text-anchor="end" font-weight="normal" textLength="39.47" lengthAdjust="spacingAndGlyphs" >27.560</text><text x="273.5" y="616.1" font-size="13.5" fill="#d23a48" text-anchor="end" font-weight="normal" textLength="39.47" lengthAdjust="spacingAndGlyphs" >27.570</text><text x="342.5" y="616.1" font-size="13.5" fill="#3232c8" text-anchor="end" font-weight="normal" textLength="36.96" lengthAdjust="spacingAndGlyphs" >1.45%</text><rect x="5" y="621.27" width="342.5" height="22.72" fill="#ffa500" /><line x1="5" y1="643.44" x2="347.5" y2="643.44" stroke="#000000" stroke-width="1" opacity="0.07"/><path d="M13 636.77 L20 629.77 M15 629.77 H20 V634.77" fill="none" stroke="#2ea83a" stroke-width="1.5"/><text x="30" y="638.77" font-size="13.5" fill="#1e1e1e" text-anchor="start" font-weight="normal" textLength="45.54" lengthAdjust="spacingAndGlyphs" >XTIUSD</text><text x="205.5" y="638.77" font-size="13.5" fill="#222" text-anchor="end" font-weight="normal" textLength="32.29" lengthAdjust="spacingAndGlyphs" >71.09</text><text x="273.5" y="638.77" font-size="13.5" fill="#222" text-anchor="end" font-weight="normal" textLength="32.29" lengthAdjust="spacingAndGlyphs" >71.12</text><text x="342.5" y="638.77" font-size="13.5" fill="#222" text-anchor="end" font-weight="normal" textLength="36.96" lengthAdjust="spacingAndGlyphs" >1.51%</text><line x1="141.5" y1="119.5" x2="141.5" y2="643.94" stroke="#ffffff" stroke-width="1" opacity="0.55"/><line x1="141.5" y1="119.5" x2="141.5" y2="145.2" stroke="#e4e4e4" stroke-width="1" /><line x1="209.5" y1="119.5" x2="209.5" y2="643.94" stroke="#ffffff" stroke-width="1" opacity="0.55"/><line x1="209.5" y1="119.5" x2="209.5" y2="145.2" stroke="#e4e4e4" stroke-width="1" /><line x1="277.5" y1="119.5" x2="277.5" y2="643.94" stroke="#ffffff" stroke-width="1" opacity="0.55"/><line x1="277.5" y1="119.5" x2="277.5" y2="145.2" stroke="#e4e4e4" stroke-width="1" /><path d="M12 654.94 H22 M17 649.94 V659.94" stroke="#2ea83a" stroke-width="1.5"/><text x="30" y="661.44" font-size="13.5" fill="#8a8a8a" text-anchor="start" font-weight="normal" letter-spacing="0.3" >click to add...</text><text x="342.5" y="661.44" font-size="13.5" fill="#8a8a8a" text-anchor="end" font-weight="normal" letter-spacing="0.15" >22 / 2233</text><rect x="5" y="1117" width="348" height="24" fill="#f0f0f0" /><line x1="5" y1="1117.5" x2="347" y2="1117.5" stroke="#777" stroke-width="1" /><path d="M6.5 1113 V1140.5 H81 V1117.5" fill="#ffffff" stroke="#555" stroke-width="1"/><rect x="7" y="1118" width="73.5" height="22" fill="#ffffff" /><text x="18.5" y="1133.5" font-size="13.5" fill="#1e1e1e" text-anchor="start" font-weight="normal" >Symbols</text><text x="93.5" y="1133.5" font-size="13.5" fill="#8a8a8a" text-anchor="start" font-weight="normal" >Details</text><line x1="147.5" y1="1121" x2="147.5" y2="1139" stroke="#bbb" stroke-width="1" /><text x="159" y="1133.5" font-size="13.5" fill="#8a8a8a" text-anchor="start" font-weight="normal" >Trading</text><line x1="217.5" y1="1121" x2="217.5" y2="1139" stroke="#bbb" stroke-width="1" /><text x="229" y="1133.5" font-size="13.5" fill="#8a8a8a" text-anchor="start" font-weight="normal" >Ticks</text><line x1="0" y1="1146.5" x2="353" y2="1146.5" stroke="#dcdcdc" stroke-width="1" /><rect x="353" y="100" width="2207" height="1024" fill="#ffffff" /><rect x="353" y="100.5" width="2207" height="2" fill="#ebebeb" /><line x1="353.5" y1="100" x2="353.5" y2="1124" stroke="#b4b4b4" stroke-width="1" /><line x1="355.5" y1="102" x2="355.5" y2="1124" stroke="#6e6e6e" stroke-width="1.2" /><line x1="353" y1="100.5" x2="2560" y2="100.5" stroke="#b4b4b4" stroke-width="1" /><line x1="355" y1="102.5" x2="2502" y2="102.5" stroke="#6e6e6e" stroke-width="1.2" /><line x1="2559.5" y1="102" x2="2559.5" y2="1124" stroke="#d8d8d8" stroke-width="1" /><g stroke-width="1.2"><rect x="362" y="108.5" width="16.5" height="12" rx="1.5" fill="#fde3e3" stroke="#e07070"/><rect x="370" y="108.5" width="8.5" height="12" fill="#cfe8fb" stroke="#4a90c0"/><path d="M364.5 112 H368.5 M364.5 114.5 H368.5 M364.5 117 H368.5" stroke="#e07070"/><path d="M372 112 H376.5 M372 114.5 H376.5 M372 117 H376.5" stroke="#4a90c0"/></g><g stroke-width="1.2"><path d="M386.5 108.5 H390 V113 H393 V120.5 H386.5 Z" fill="#fde3e3" stroke="#e07070"/><path d="M396 120.5 V114.5 H399 V108.5 H402.5 V120.5 Z" fill="#cfe8fb" stroke="#4a90c0"/><rect x="393" y="108.5" width="3.5" height="3" fill="#ddd" stroke="#999" stroke-width="0.8"/></g><text x="408.5" y="119" font-size="11.2" fill="#3a3a3a" text-anchor="start" font-weight="normal" textLength="197" lengthAdjust="spacingAndGlyphs">USDCHF, Daily:  US Dollar vs Swiss Franc</text><g clip-path="url(#mainclip)"><defs><clipPath id="mainclip"><rect x="356" y="103" width="2145" height="666"/></clipPath></defs><line x1="356" y1="695.5" x2="2501" y2="695.5" stroke="#b8b8b8" stroke-width="1" /><line x1="355.60" y1="215.8" x2="355.60" y2="270.8" stroke="#6f8572" stroke-width="1.25"/><rect x="352.10" y="215.80" width="7" height="55.00" fill="#008a0e" stroke="#1a6a1a" stroke-width="0.6"/><line x1="366.27" y1="210.8" x2="366.27" y2="258.1" stroke="#a07880" stroke-width="1.25"/><rect x="362.77" y="215.50" width="7" height="8.30" fill="#dc143c" stroke="#b8203a" stroke-width="0.6"/><line x1="376.94" y1="200.0" x2="376.94" y2="308.9" stroke="#a07880" stroke-width="1.25"/><rect x="373.44" y="240.00" width="7" height="61.80" fill="#dc143c" stroke="#b8203a" stroke-width="0.6"/><line x1="387.61" y1="254.0" x2="387.61" y2="307.0" stroke="#a07880" stroke-width="1.25"/><rect x="384.11" y="302.60" width="7" height="2.90" fill="#dc143c" stroke="#b8203a" stroke-width="0.6"/><line x1="398.28" y1="245.0" x2="398.28" y2="314.8" stroke="#6f8572" stroke-width="1.25"/><rect x="394.78" y="245.00" width="7" height="66.00" fill="#008a0e" stroke="#1a6a1a" stroke-width="0.6"/><line x1="408.95" y1="208.0" x2="408.95" y2="266.6" stroke="#6f8572" stroke-width="1.25"/><rect x="405.45" y="221.00" width="7" height="40.00" fill="#008a0e" stroke="#1a6a1a" stroke-width="0.6"/><line x1="419.62" y1="211.6" x2="419.62" y2="289.4" stroke="#a07880" stroke-width="1.25"/><rect x="416.12" y="230.00" width="7" height="54.70" fill="#dc143c" stroke="#b8203a" stroke-width="0.6"/><line x1="430.29" y1="237.8" x2="430.29" y2="289.0" stroke="#6f8572" stroke-width="1.25"/><rect x="426.79" y="264.50" width="7" height="20.70" fill="#008a0e" stroke="#1a6a1a" stroke-width="0.6"/><line x1="440.96" y1="225.0" x2="440.96" y2="292.0" stroke="#6f8572" stroke-width="1.25"/><rect x="437.46" y="230.00" width="7" height="35.00" fill="#008a0e" stroke="#1a6a1a" stroke-width="0.6"/><line x1="451.63" y1="206.5" x2="451.63" y2="243.7" stroke="#6f8572" stroke-width="1.25"/><rect x="448.13" y="209.60" width="7" height="23.20" fill="#008a0e" stroke="#1a6a1a" stroke-width="0.6"/><line x1="462.31" y1="178.0" x2="462.31" y2="219.7" stroke="#6f8572" stroke-width="1.25"/><rect x="458.81" y="183.40" width="7" height="36.30" fill="#008a0e" stroke="#1a6a1a" stroke-width="0.6"/><line x1="472.98" y1="172.4" x2="472.98" y2="225.5" stroke="#a07880" stroke-width="1.25"/><rect x="469.48" y="189.30" width="7" height="9.30" fill="#dc143c" stroke="#b8203a" stroke-width="0.6"/><line x1="483.65" y1="181.0" x2="483.65" y2="218.0" stroke="#6f8572" stroke-width="1.25"/><rect x="480.15" y="195.50" width="7" height="2.50" fill="#008a0e" stroke="#1a6a1a" stroke-width="0.6"/><line x1="494.32" y1="146.0" x2="494.32" y2="203.2" stroke="#6f8572" stroke-width="1.25"/><rect x="490.82" y="177.30" width="7" height="19.40" fill="#008a0e" stroke="#1a6a1a" stroke-width="0.6"/><line x1="504.99" y1="150.7" x2="504.99" y2="201.5" stroke="#6f8572" stroke-width="1.25"/><rect x="501.49" y="156.00" width="7" height="35.00" fill="#008a0e" stroke="#1a6a1a" stroke-width="0.6"/><line x1="515.66" y1="155.0" x2="515.66" y2="211.6" stroke="#a07880" stroke-width="1.25"/><rect x="512.16" y="161.00" width="7" height="43.50" fill="#dc143c" stroke="#b8203a" stroke-width="0.6"/><line x1="526.33" y1="193.0" x2="526.33" y2="223.8" stroke="#a07880" stroke-width="1.25"/><rect x="522.83" y="206.00" width="7" height="6.50" fill="#dc143c" stroke="#b8203a" stroke-width="0.6"/><line x1="537.00" y1="152.0" x2="537.00" y2="217.5" stroke="#6f8572" stroke-width="1.25"/><rect x="533.50" y="161.00" width="7" height="56.50" fill="#008a0e" stroke="#1a6a1a" stroke-width="0.6"/><line x1="547.67" y1="149.0" x2="547.67" y2="186.6" stroke="#6f8572" stroke-width="1.25"/><rect x="544.17" y="168.50" width="7" height="1.60" fill="#008a0e" stroke="#1a6a1a" stroke-width="0.6"/><line x1="558.34" y1="113.5" x2="558.34" y2="202.3" stroke="#a07880" stroke-width="1.25"/><rect x="554.84" y="169.30" width="7" height="24.20" fill="#dc143c" stroke="#b8203a" stroke-width="0.6"/><line x1="569.01" y1="167.6" x2="569.01" y2="210.8" stroke="#6f8572" stroke-width="1.25"/><rect x="565.51" y="179.50" width="7" height="24.00" fill="#008a0e" stroke="#1a6a1a" stroke-width="0.6"/><line x1="579.68" y1="167.6" x2="579.68" y2="212.5" stroke="#a07880" stroke-width="1.25"/><rect x="576.18" y="181.70" width="7" height="29.60" fill="#dc143c" stroke="#b8203a" stroke-width="0.6"/><line x1="590.35" y1="202.3" x2="590.35" y2="256.4" stroke="#a07880" stroke-width="1.25"/><rect x="586.85" y="210.30" width="7" height="41.60" fill="#dc143c" stroke="#b8203a" stroke-width="0.6"/><line x1="601.02" y1="218.9" x2="601.02" y2="261.5" stroke="#6f8572" stroke-width="1.25"/><rect x="597.52" y="229.70" width="7" height="25.90" fill="#008a0e" stroke="#1a6a1a" stroke-width="0.6"/><line x1="611.69" y1="193.0" x2="611.69" y2="240.7" stroke="#6f8572" stroke-width="1.25"/><rect x="608.19" y="202.80" width="7" height="28.80" fill="#008a0e" stroke="#1a6a1a" stroke-width="0.6"/><line x1="622.36" y1="167.6" x2="622.36" y2="204.9" stroke="#6f8572" stroke-width="1.25"/><rect x="618.86" y="174.90" width="7" height="30.00" fill="#008a0e" stroke="#1a6a1a" stroke-width="0.6"/><line x1="633.03" y1="172.7" x2="633.03" y2="225.1" stroke="#a07880" stroke-width="1.25"/><rect x="629.53" y="177.50" width="7" height="5.40" fill="#dc143c" stroke="#b8203a" stroke-width="0.6"/><line x1="643.70" y1="164.0" x2="643.70" y2="227.7" stroke="#6f8572" stroke-width="1.25"/><rect x="640.20" y="167.10" width="7" height="27.90" fill="#008a0e" stroke="#1a6a1a" stroke-width="0.6"/><line x1="654.37" y1="111.0" x2="654.37" y2="182.0" stroke="#6f8572" stroke-width="1.25"/><rect x="650.87" y="117.40" width="7" height="52.80" fill="#008a0e" stroke="#1a6a1a" stroke-width="0.6"/><line x1="665.04" y1="112.2" x2="665.04" y2="216.7" stroke="#a07880" stroke-width="1.25"/><rect x="661.54" y="124.20" width="7" height="87.10" fill="#dc143c" stroke="#b8203a" stroke-width="0.6"/><line x1="675.72" y1="191.0" x2="675.72" y2="244.6" stroke="#a07880" stroke-width="1.25"/><rect x="672.22" y="193.40" width="7" height="48.30" fill="#dc143c" stroke="#b8203a" stroke-width="0.6"/><line x1="686.39" y1="219.2" x2="686.39" y2="263.2" stroke="#a07880" stroke-width="1.25"/><rect x="682.89" y="242.00" width="7" height="11.00" fill="#dc143c" stroke="#b8203a" stroke-width="0.6"/><line x1="697.06" y1="245.4" x2="697.06" y2="281.8" stroke="#a07880" stroke-width="1.25"/><rect x="693.56" y="260.30" width="7" height="2.10" fill="#dc143c" stroke="#b8203a" stroke-width="0.6"/><line x1="707.73" y1="232.8" x2="707.73" y2="365.6" stroke="#a07880" stroke-width="1.25"/><rect x="704.23" y="264.10" width="7" height="99.30" fill="#dc143c" stroke="#b8203a" stroke-width="0.6"/><line x1="718.40" y1="340.2" x2="718.40" y2="479.9" stroke="#a07880" stroke-width="1.25"/><rect x="714.90" y="368.90" width="7" height="103.70" fill="#dc143c" stroke="#b8203a" stroke-width="0.6"/><line x1="729.07" y1="434.4" x2="729.07" y2="478.1" stroke="#6f8572" stroke-width="1.25"/><rect x="725.57" y="463.80" width="7" height="3.30" fill="#008a0e" stroke="#1a6a1a" stroke-width="0.6"/><line x1="739.74" y1="441.7" x2="739.74" y2="500.2" stroke="#6f8572" stroke-width="1.25"/><rect x="736.24" y="456.50" width="7" height="6.20" fill="#008a0e" stroke="#1a6a1a" stroke-width="0.6"/><line x1="750.41" y1="443.9" x2="750.41" y2="486.5" stroke="#6f8572" stroke-width="1.25"/><rect x="746.91" y="456.50" width="7" height="11.20" fill="#008a0e" stroke="#1a6a1a" stroke-width="0.6"/><line x1="761.08" y1="400.9" x2="761.08" y2="462.7" stroke="#6f8572" stroke-width="1.25"/><rect x="757.58" y="419.20" width="7" height="39.10" fill="#008a0e" stroke="#1a6a1a" stroke-width="0.6"/><line x1="771.75" y1="406.4" x2="771.75" y2="430.7" stroke="#6f8572" stroke-width="1.25"/><rect x="768.25" y="406.40" width="7" height="19.40" fill="#008a0e" stroke="#1a6a1a" stroke-width="0.6"/><line x1="782.42" y1="381.0" x2="782.42" y2="414.1" stroke="#6f8572" stroke-width="1.25"/><rect x="778.92" y="385.50" width="7" height="27.50" fill="#008a0e" stroke="#1a6a1a" stroke-width="0.6"/><line x1="793.09" y1="385.9" x2="793.09" y2="425.2" stroke="#a07880" stroke-width="1.25"/><rect x="789.59" y="393.20" width="7" height="27.50" fill="#dc143c" stroke="#b8203a" stroke-width="0.6"/><line x1="803.76" y1="413.0" x2="803.76" y2="473.7" stroke="#a07880" stroke-width="1.25"/><rect x="800.26" y="424.00" width="7" height="42.00" fill="#dc143c" stroke="#b8203a" stroke-width="0.6"/><line x1="814.43" y1="456.0" x2="814.43" y2="485.8" stroke="#6f8572" stroke-width="1.25"/><rect x="810.93" y="463.10" width="7" height="6.20" fill="#008a0e" stroke="#1a6a1a" stroke-width="0.6"/><line x1="825.10" y1="429.6" x2="825.10" y2="468.2" stroke="#6f8572" stroke-width="1.25"/><rect x="821.60" y="454.30" width="7" height="11.70" fill="#008a0e" stroke="#1a6a1a" stroke-width="0.6"/><line x1="835.77" y1="430.7" x2="835.77" y2="477.0" stroke="#6f8572" stroke-width="1.25"/><rect x="832.27" y="435.10" width="7" height="16.50" fill="#008a0e" stroke="#1a6a1a" stroke-width="0.6"/><line x1="846.44" y1="407.0" x2="846.44" y2="449.4" stroke="#6f8572" stroke-width="1.25"/><rect x="842.94" y="410.20" width="7" height="26.40" fill="#008a0e" stroke="#1a6a1a" stroke-width="0.6"/><line x1="857.11" y1="406.4" x2="857.11" y2="463.8" stroke="#a07880" stroke-width="1.25"/><rect x="853.61" y="424.00" width="7" height="28.70" fill="#dc143c" stroke="#b8203a" stroke-width="0.6"/><line x1="867.78" y1="449.0" x2="867.78" y2="495.8" stroke="#a07880" stroke-width="1.25"/><rect x="864.28" y="456.00" width="7" height="38.70" fill="#dc143c" stroke="#b8203a" stroke-width="0.6"/><line x1="878.45" y1="460.0" x2="878.45" y2="515.6" stroke="#6f8572" stroke-width="1.25"/><rect x="874.95" y="494.20" width="7" height="1.60" fill="#008a0e" stroke="#1a6a1a" stroke-width="0.6"/><line x1="889.12" y1="460.9" x2="889.12" y2="513.4" stroke="#6f8572" stroke-width="1.25"/><rect x="885.62" y="465.30" width="7" height="23.40" fill="#008a0e" stroke="#1a6a1a" stroke-width="0.6"/><line x1="899.80" y1="450.5" x2="899.80" y2="488.7" stroke="#6f8572" stroke-width="1.25"/><rect x="896.30" y="468.20" width="7" height="6.20" fill="#008a0e" stroke="#1a6a1a" stroke-width="0.6"/><line x1="910.47" y1="460.5" x2="910.47" y2="496.9" stroke="#a07880" stroke-width="1.25"/><rect x="906.97" y="472.20" width="7" height="3.00" fill="#dc143c" stroke="#b8203a" stroke-width="0.6"/><line x1="921.14" y1="465.8" x2="921.14" y2="506.5" stroke="#a07880" stroke-width="1.25"/><rect x="917.64" y="475.00" width="7" height="22.30" fill="#dc143c" stroke="#b8203a" stroke-width="0.6"/><line x1="931.81" y1="487.6" x2="931.81" y2="522.2" stroke="#a07880" stroke-width="1.25"/><rect x="928.31" y="498.90" width="7" height="6.80" fill="#dc143c" stroke="#b8203a" stroke-width="0.6"/><line x1="942.48" y1="488.4" x2="942.48" y2="521.6" stroke="#6f8572" stroke-width="1.25"/><rect x="938.98" y="498.10" width="7" height="14.40" fill="#008a0e" stroke="#1a6a1a" stroke-width="0.6"/><line x1="953.15" y1="491.2" x2="953.15" y2="562.0" stroke="#a07880" stroke-width="1.25"/><rect x="949.65" y="494.10" width="7" height="41.20" fill="#dc143c" stroke="#b8203a" stroke-width="0.6"/><line x1="963.82" y1="529.2" x2="963.82" y2="569.6" stroke="#a07880" stroke-width="1.25"/><rect x="960.32" y="540.20" width="7" height="15.70" fill="#dc143c" stroke="#b8203a" stroke-width="0.6"/><line x1="974.49" y1="520.0" x2="974.49" y2="563.2" stroke="#6f8572" stroke-width="1.25"/><rect x="970.99" y="534.40" width="7" height="27.60" fill="#008a0e" stroke="#1a6a1a" stroke-width="0.6"/><line x1="985.16" y1="507.7" x2="985.16" y2="550.7" stroke="#6f8572" stroke-width="1.25"/><rect x="981.66" y="507.70" width="7" height="33.90" fill="#008a0e" stroke="#1a6a1a" stroke-width="0.6"/><line x1="995.83" y1="504.4" x2="995.83" y2="534.8" stroke="#a07880" stroke-width="1.25"/><rect x="992.33" y="520.30" width="7" height="14.50" fill="#dc143c" stroke="#b8203a" stroke-width="0.6"/><line x1="1006.50" y1="524.0" x2="1006.50" y2="557.2" stroke="#a07880" stroke-width="1.25"/><rect x="1003.00" y="535.20" width="7" height="12.30" fill="#dc143c" stroke="#b8203a" stroke-width="0.6"/><line x1="1017.17" y1="532.9" x2="1017.17" y2="558.8" stroke="#6f8572" stroke-width="1.25"/><rect x="1013.67" y="544.00" width="7" height="5.40" fill="#008a0e" stroke="#1a6a1a" stroke-width="0.6"/><line x1="1027.84" y1="516.7" x2="1027.84" y2="564.0" stroke="#6f8572" stroke-width="1.25"/><rect x="1024.34" y="523.00" width="7" height="21.90" fill="#008a0e" stroke="#1a6a1a" stroke-width="0.6"/><line x1="1038.51" y1="504.9" x2="1038.51" y2="535.7" stroke="#6f8572" stroke-width="1.25"/><rect x="1035.01" y="511.90" width="7" height="10.80" fill="#008a0e" stroke="#1a6a1a" stroke-width="0.6"/><line x1="1049.18" y1="512.7" x2="1049.18" y2="543.7" stroke="#a07880" stroke-width="1.25"/><rect x="1045.68" y="522.70" width="7" height="8.90" fill="#dc143c" stroke="#b8203a" stroke-width="0.6"/><line x1="1059.85" y1="524.3" x2="1059.85" y2="555.1" stroke="#6f8572" stroke-width="1.25"/><rect x="1056.35" y="533.20" width="7" height="4.10" fill="#008a0e" stroke="#1a6a1a" stroke-width="0.6"/><line x1="1070.52" y1="533.2" x2="1070.52" y2="572.0" stroke="#a07880" stroke-width="1.25"/><rect x="1067.02" y="541.00" width="7" height="20.50" fill="#dc143c" stroke="#b8203a" stroke-width="0.6"/><line x1="1081.19" y1="544.2" x2="1081.19" y2="576.6" stroke="#6f8572" stroke-width="1.25"/><rect x="1077.69" y="553.80" width="7" height="8.90" fill="#008a0e" stroke="#1a6a1a" stroke-width="0.6"/><line x1="1091.86" y1="543.0" x2="1091.86" y2="569.6" stroke="#6f8572" stroke-width="1.25"/><rect x="1088.36" y="557.20" width="7" height="4.70" fill="#008a0e" stroke="#1a6a1a" stroke-width="0.6"/><line x1="1102.54" y1="479.0" x2="1102.54" y2="562.3" stroke="#6f8572" stroke-width="1.25"/><rect x="1099.04" y="499.60" width="7" height="53.90" fill="#008a0e" stroke="#1a6a1a" stroke-width="0.6"/><line x1="1113.21" y1="495.2" x2="1113.21" y2="551.8" stroke="#a07880" stroke-width="1.25"/><rect x="1109.71" y="495.20" width="7" height="34.80" fill="#dc143c" stroke="#b8203a" stroke-width="0.6"/><line x1="1123.88" y1="489.3" x2="1123.88" y2="547.6" stroke="#6f8572" stroke-width="1.25"/><rect x="1120.38" y="497.40" width="7" height="34.00" fill="#008a0e" stroke="#1a6a1a" stroke-width="0.6"/><line x1="1134.55" y1="474.5" x2="1134.55" y2="542.7" stroke="#a07880" stroke-width="1.25"/><rect x="1131.05" y="498.70" width="7" height="40.80" fill="#dc143c" stroke="#b8203a" stroke-width="0.6"/><line x1="1145.22" y1="537.9" x2="1145.22" y2="593.4" stroke="#a07880" stroke-width="1.25"/><rect x="1141.72" y="542.20" width="7" height="27.50" fill="#dc143c" stroke="#b8203a" stroke-width="0.6"/><line x1="1155.89" y1="550.8" x2="1155.89" y2="579.9" stroke="#6f8572" stroke-width="1.25"/><rect x="1152.39" y="563.70" width="7" height="10.90" fill="#008a0e" stroke="#1a6a1a" stroke-width="0.6"/><line x1="1166.56" y1="512.3" x2="1166.56" y2="575.1" stroke="#6f8572" stroke-width="1.25"/><rect x="1163.06" y="520.90" width="7" height="48.50" fill="#008a0e" stroke="#1a6a1a" stroke-width="0.6"/><line x1="1177.23" y1="498.2" x2="1177.23" y2="544.8" stroke="#a07880" stroke-width="1.25"/><rect x="1173.73" y="524.90" width="7" height="16.70" fill="#dc143c" stroke="#b8203a" stroke-width="0.6"/><line x1="1187.90" y1="519.6" x2="1187.90" y2="550.0" stroke="#a07880" stroke-width="1.25"/><rect x="1184.40" y="543.00" width="7" height="3.00" fill="#dc143c" stroke="#b8203a" stroke-width="0.6"/><line x1="1198.57" y1="533.5" x2="1198.57" y2="567.8" stroke="#a07880" stroke-width="1.25"/><rect x="1195.07" y="545.60" width="7" height="2.00" fill="#dc143c" stroke="#b8203a" stroke-width="0.6"/><line x1="1209.24" y1="539.5" x2="1209.24" y2="583.2" stroke="#a07880" stroke-width="1.25"/><rect x="1205.74" y="551.60" width="7" height="16.20" fill="#dc143c" stroke="#b8203a" stroke-width="0.6"/><line x1="1219.91" y1="554.4" x2="1219.91" y2="633.3" stroke="#a07880" stroke-width="1.25"/><rect x="1216.41" y="567.80" width="7" height="27.20" fill="#dc143c" stroke="#b8203a" stroke-width="0.6"/><line x1="1230.58" y1="582.3" x2="1230.58" y2="603.4" stroke="#6f8572" stroke-width="1.25"/><rect x="1227.08" y="596.90" width="7" height="4.90" fill="#008a0e" stroke="#1a6a1a" stroke-width="0.6"/><line x1="1241.25" y1="559.7" x2="1241.25" y2="605.8" stroke="#6f8572" stroke-width="1.25"/><rect x="1237.75" y="576.20" width="7" height="28.00" fill="#008a0e" stroke="#1a6a1a" stroke-width="0.6"/><line x1="1251.92" y1="556.5" x2="1251.92" y2="596.9" stroke="#6f8572" stroke-width="1.25"/><rect x="1248.42" y="568.10" width="7" height="23.90" fill="#008a0e" stroke="#1a6a1a" stroke-width="0.6"/><line x1="1262.59" y1="537.5" x2="1262.59" y2="581.5" stroke="#6f8572" stroke-width="1.25"/><rect x="1259.09" y="564.90" width="7" height="4.50" fill="#008a0e" stroke="#1a6a1a" stroke-width="0.6"/><line x1="1273.26" y1="554.5" x2="1273.26" y2="590.4" stroke="#a07880" stroke-width="1.25"/><rect x="1269.76" y="565.90" width="7" height="21.60" fill="#dc143c" stroke="#b8203a" stroke-width="0.6"/><line x1="1283.93" y1="564.2" x2="1283.93" y2="597.7" stroke="#6f8572" stroke-width="1.25"/><rect x="1280.43" y="575.90" width="7" height="13.20" fill="#008a0e" stroke="#1a6a1a" stroke-width="0.6"/><line x1="1294.60" y1="557.3" x2="1294.60" y2="589.1" stroke="#6f8572" stroke-width="1.25"/><rect x="1291.10" y="572.30" width="7" height="4.90" fill="#008a0e" stroke="#1a6a1a" stroke-width="0.6"/><line x1="1305.27" y1="549.2" x2="1305.27" y2="586.4" stroke="#6f8572" stroke-width="1.25"/><rect x="1301.77" y="552.90" width="7" height="25.40" fill="#008a0e" stroke="#1a6a1a" stroke-width="0.6"/><line x1="1315.95" y1="533.8" x2="1315.95" y2="601.8" stroke="#a07880" stroke-width="1.25"/><rect x="1312.45" y="561.60" width="7" height="35.00" fill="#dc143c" stroke="#b8203a" stroke-width="0.6"/><line x1="1326.62" y1="584.8" x2="1326.62" y2="641.4" stroke="#a07880" stroke-width="1.25"/><rect x="1323.12" y="599.30" width="7" height="34.50" fill="#dc143c" stroke="#b8203a" stroke-width="0.6"/><line x1="1337.29" y1="606.6" x2="1337.29" y2="646.2" stroke="#6f8572" stroke-width="1.25"/><rect x="1333.79" y="611.10" width="7" height="24.90" fill="#008a0e" stroke="#1a6a1a" stroke-width="0.6"/><line x1="1347.96" y1="543.5" x2="1347.96" y2="615.0" stroke="#6f8572" stroke-width="1.25"/><rect x="1344.46" y="548.40" width="7" height="62.30" fill="#008a0e" stroke="#1a6a1a" stroke-width="0.6"/><line x1="1358.63" y1="532.2" x2="1358.63" y2="564.2" stroke="#6f8572" stroke-width="1.25"/><rect x="1355.13" y="537.00" width="7" height="4.60" fill="#008a0e" stroke="#1a6a1a" stroke-width="0.6"/><line x1="1369.30" y1="533.5" x2="1369.30" y2="581.5" stroke="#a07880" stroke-width="1.25"/><rect x="1365.80" y="546.40" width="7" height="21.40" fill="#dc143c" stroke="#b8203a" stroke-width="0.6"/><line x1="1379.97" y1="565.8" x2="1379.97" y2="588.0" stroke="#a07880" stroke-width="1.25"/><rect x="1376.47" y="571.50" width="7" height="1.60" fill="#dc143c" stroke="#b8203a" stroke-width="0.6"/><line x1="1390.64" y1="563.3" x2="1390.64" y2="596.9" stroke="#6f8572" stroke-width="1.25"/><rect x="1387.14" y="566.50" width="7" height="7.00" fill="#008a0e" stroke="#1a6a1a" stroke-width="0.6"/><line x1="1401.31" y1="550.8" x2="1401.31" y2="578.8" stroke="#6f8572" stroke-width="1.25"/><rect x="1397.81" y="560.00" width="7" height="7.50" fill="#008a0e" stroke="#1a6a1a" stroke-width="0.6"/><line x1="1411.98" y1="547.6" x2="1411.98" y2="580.7" stroke="#a07880" stroke-width="1.25"/><rect x="1408.48" y="561.00" width="7" height="19.70" fill="#dc143c" stroke="#b8203a" stroke-width="0.6"/><line x1="1422.65" y1="560.5" x2="1422.65" y2="607.4" stroke="#6f8572" stroke-width="1.25"/><rect x="1419.15" y="569.10" width="7" height="13.60" fill="#008a0e" stroke="#1a6a1a" stroke-width="0.6"/><line x1="1433.32" y1="546.0" x2="1433.32" y2="577.2" stroke="#6f8572" stroke-width="1.25"/><rect x="1429.82" y="558.60" width="7" height="14.90" fill="#008a0e" stroke="#1a6a1a" stroke-width="0.6"/><line x1="1443.99" y1="541.6" x2="1443.99" y2="570.7" stroke="#6f8572" stroke-width="1.25"/><rect x="1440.49" y="549.20" width="7" height="9.20" fill="#008a0e" stroke="#1a6a1a" stroke-width="0.6"/><line x1="1454.66" y1="512.0" x2="1454.66" y2="556.5" stroke="#a07880" stroke-width="1.25"/><rect x="1451.16" y="551.60" width="7" height="4.90" fill="#dc143c" stroke="#b8203a" stroke-width="0.6"/><line x1="1465.33" y1="548.0" x2="1465.33" y2="567.8" stroke="#a07880" stroke-width="1.25"/><rect x="1461.83" y="555.20" width="7" height="6.10" fill="#dc143c" stroke="#b8203a" stroke-width="0.6"/><line x1="1476.00" y1="536.7" x2="1476.00" y2="565.4" stroke="#6f8572" stroke-width="1.25"/><rect x="1472.50" y="539.20" width="7" height="26.20" fill="#008a0e" stroke="#1a6a1a" stroke-width="0.6"/><line x1="1486.67" y1="518.5" x2="1486.67" y2="551.6" stroke="#6f8572" stroke-width="1.25"/><rect x="1483.17" y="521.70" width="7" height="18.90" fill="#008a0e" stroke="#1a6a1a" stroke-width="0.6"/><line x1="1497.34" y1="504.4" x2="1497.34" y2="533.0" stroke="#6f8572" stroke-width="1.25"/><rect x="1493.84" y="508.30" width="7" height="13.40" fill="#008a0e" stroke="#1a6a1a" stroke-width="0.6"/><line x1="1508.01" y1="473.6" x2="1508.01" y2="515.2" stroke="#6f8572" stroke-width="1.25"/><rect x="1504.51" y="473.60" width="7" height="34.70" fill="#008a0e" stroke="#1a6a1a" stroke-width="0.6"/><line x1="1518.68" y1="463.9" x2="1518.68" y2="506.3" stroke="#a07880" stroke-width="1.25"/><rect x="1515.18" y="481.20" width="7" height="18.30" fill="#dc143c" stroke="#b8203a" stroke-width="0.6"/><line x1="1529.36" y1="468.3" x2="1529.36" y2="507.9" stroke="#6f8572" stroke-width="1.25"/><rect x="1525.86" y="468.30" width="7" height="31.60" fill="#008a0e" stroke="#1a6a1a" stroke-width="0.6"/><line x1="1540.03" y1="465.0" x2="1540.03" y2="503.4" stroke="#a07880" stroke-width="1.25"/><rect x="1536.53" y="469.10" width="7" height="11.30" fill="#dc143c" stroke="#b8203a" stroke-width="0.6"/><line x1="1550.70" y1="459.0" x2="1550.70" y2="491.4" stroke="#6f8572" stroke-width="1.25"/><rect x="1547.20" y="467.20" width="7" height="14.50" fill="#008a0e" stroke="#1a6a1a" stroke-width="0.6"/><line x1="1561.37" y1="468.8" x2="1561.37" y2="499.0" stroke="#a07880" stroke-width="1.25"/><rect x="1557.87" y="472.40" width="7" height="25.50" fill="#dc143c" stroke="#b8203a" stroke-width="0.6"/><line x1="1572.04" y1="491.8" x2="1572.04" y2="524.4" stroke="#a07880" stroke-width="1.25"/><rect x="1568.54" y="497.40" width="7" height="27.00" fill="#dc143c" stroke="#b8203a" stroke-width="0.6"/><line x1="1582.71" y1="466.2" x2="1582.71" y2="535.4" stroke="#6f8572" stroke-width="1.25"/><rect x="1579.21" y="468.30" width="7" height="57.40" fill="#008a0e" stroke="#1a6a1a" stroke-width="0.6"/><line x1="1593.38" y1="459.7" x2="1593.38" y2="485.0" stroke="#6f8572" stroke-width="1.25"/><rect x="1589.88" y="472.00" width="7" height="1.60" fill="#008a0e" stroke="#1a6a1a" stroke-width="0.6"/><line x1="1604.05" y1="470.0" x2="1604.05" y2="515.7" stroke="#a07880" stroke-width="1.25"/><rect x="1600.55" y="471.00" width="7" height="44.70" fill="#dc143c" stroke="#b8203a" stroke-width="0.6"/><line x1="1614.72" y1="512.0" x2="1614.72" y2="590.4" stroke="#a07880" stroke-width="1.25"/><rect x="1611.22" y="515.70" width="7" height="56.10" fill="#dc143c" stroke="#b8203a" stroke-width="0.6"/><line x1="1625.39" y1="575.0" x2="1625.39" y2="640.6" stroke="#a07880" stroke-width="1.25"/><rect x="1621.89" y="583.20" width="7" height="33.90" fill="#dc143c" stroke="#b8203a" stroke-width="0.6"/><line x1="1636.06" y1="594.5" x2="1636.06" y2="628.4" stroke="#6f8572" stroke-width="1.25"/><rect x="1632.56" y="606.30" width="7" height="18.10" fill="#008a0e" stroke="#1a6a1a" stroke-width="0.6"/><line x1="1646.73" y1="509.6" x2="1646.73" y2="617.9" stroke="#6f8572" stroke-width="1.25"/><rect x="1643.23" y="510.90" width="7" height="107.00" fill="#008a0e" stroke="#1a6a1a" stroke-width="0.6"/><line x1="1657.40" y1="507.1" x2="1657.40" y2="562.9" stroke="#a07880" stroke-width="1.25"/><rect x="1653.90" y="513.60" width="7" height="17.80" fill="#dc143c" stroke="#b8203a" stroke-width="0.6"/><line x1="1668.07" y1="528.2" x2="1668.07" y2="558.1" stroke="#a07880" stroke-width="1.25"/><rect x="1664.57" y="530.90" width="7" height="15.10" fill="#dc143c" stroke="#b8203a" stroke-width="0.6"/><line x1="1678.74" y1="521.7" x2="1678.74" y2="557.3" stroke="#6f8572" stroke-width="1.25"/><rect x="1675.24" y="531.90" width="7" height="20.80" fill="#008a0e" stroke="#1a6a1a" stroke-width="0.6"/><line x1="1689.41" y1="519.6" x2="1689.41" y2="572.6" stroke="#a07880" stroke-width="1.25"/><rect x="1685.91" y="533.50" width="7" height="32.40" fill="#dc143c" stroke="#b8203a" stroke-width="0.6"/><line x1="1700.08" y1="554.5" x2="1700.08" y2="603.4" stroke="#a07880" stroke-width="1.25"/><rect x="1696.58" y="566.20" width="7" height="24.60" fill="#dc143c" stroke="#b8203a" stroke-width="0.6"/><line x1="1710.75" y1="586.4" x2="1710.75" y2="617.9" stroke="#a07880" stroke-width="1.25"/><rect x="1707.25" y="590.10" width="7" height="4.40" fill="#dc143c" stroke="#b8203a" stroke-width="0.6"/><line x1="1721.42" y1="569.1" x2="1721.42" y2="599.8" stroke="#6f8572" stroke-width="1.25"/><rect x="1717.92" y="577.50" width="7" height="17.80" fill="#008a0e" stroke="#1a6a1a" stroke-width="0.6"/><line x1="1732.09" y1="576.2" x2="1732.09" y2="599.6" stroke="#a07880" stroke-width="1.25"/><rect x="1728.59" y="585.90" width="7" height="13.70" fill="#dc143c" stroke="#b8203a" stroke-width="0.6"/><line x1="1742.76" y1="565.7" x2="1742.76" y2="608.5" stroke="#6f8572" stroke-width="1.25"/><rect x="1739.26" y="579.10" width="7" height="21.30" fill="#008a0e" stroke="#1a6a1a" stroke-width="0.6"/><line x1="1753.44" y1="565.7" x2="1753.44" y2="594.8" stroke="#a07880" stroke-width="1.25"/><rect x="1749.94" y="579.70" width="7" height="5.90" fill="#dc143c" stroke="#b8203a" stroke-width="0.6"/><line x1="1764.11" y1="576.2" x2="1764.11" y2="614.2" stroke="#a07880" stroke-width="1.25"/><rect x="1760.61" y="585.60" width="7" height="24.20" fill="#dc143c" stroke="#b8203a" stroke-width="0.6"/><line x1="1774.78" y1="587.8" x2="1774.78" y2="618.2" stroke="#6f8572" stroke-width="1.25"/><rect x="1771.28" y="601.20" width="7" height="15.10" fill="#008a0e" stroke="#1a6a1a" stroke-width="0.6"/><line x1="1785.45" y1="578.6" x2="1785.45" y2="619.0" stroke="#a07880" stroke-width="1.25"/><rect x="1781.95" y="596.90" width="7" height="16.50" fill="#dc143c" stroke="#b8203a" stroke-width="0.6"/><line x1="1796.12" y1="605.0" x2="1796.12" y2="648.6" stroke="#a07880" stroke-width="1.25"/><rect x="1792.62" y="613.70" width="7" height="31.70" fill="#dc143c" stroke="#b8203a" stroke-width="0.6"/><line x1="1806.79" y1="637.6" x2="1806.79" y2="672.9" stroke="#6f8572" stroke-width="1.25"/><rect x="1803.29" y="642.50" width="7" height="5.70" fill="#008a0e" stroke="#1a6a1a" stroke-width="0.6"/><line x1="1817.46" y1="638.5" x2="1817.46" y2="657.9" stroke="#a07880" stroke-width="1.25"/><rect x="1813.96" y="645.70" width="7" height="7.80" fill="#dc143c" stroke="#b8203a" stroke-width="0.6"/><line x1="1828.13" y1="635.2" x2="1828.13" y2="659.0" stroke="#6f8572" stroke-width="1.25"/><rect x="1824.63" y="651.40" width="7" height="4.40" fill="#008a0e" stroke="#1a6a1a" stroke-width="0.6"/><line x1="1838.80" y1="616.3" x2="1838.80" y2="662.7" stroke="#6f8572" stroke-width="1.25"/><rect x="1835.30" y="629.20" width="7" height="33.50" fill="#008a0e" stroke="#1a6a1a" stroke-width="0.6"/><line x1="1849.47" y1="627.9" x2="1849.47" y2="661.9" stroke="#a07880" stroke-width="1.25"/><rect x="1845.97" y="629.90" width="7" height="30.40" fill="#dc143c" stroke="#b8203a" stroke-width="0.6"/><line x1="1860.14" y1="659.0" x2="1860.14" y2="703.2" stroke="#a07880" stroke-width="1.25"/><rect x="1856.64" y="659.00" width="7" height="35.30" fill="#dc143c" stroke="#b8203a" stroke-width="0.6"/><line x1="1870.81" y1="687.8" x2="1870.81" y2="744.4" stroke="#a07880" stroke-width="1.25"/><rect x="1867.31" y="698.80" width="7" height="28.60" fill="#dc143c" stroke="#b8203a" stroke-width="0.6"/><line x1="1881.48" y1="695.1" x2="1881.48" y2="742.0" stroke="#6f8572" stroke-width="1.25"/><rect x="1877.98" y="705.30" width="7" height="22.60" fill="#008a0e" stroke="#1a6a1a" stroke-width="0.6"/><line x1="1892.15" y1="676.8" x2="1892.15" y2="713.7" stroke="#6f8572" stroke-width="1.25"/><rect x="1888.65" y="681.60" width="7" height="23.70" fill="#008a0e" stroke="#1a6a1a" stroke-width="0.6"/><line x1="1902.82" y1="681.6" x2="1902.82" y2="698.3" stroke="#a07880" stroke-width="1.25"/><rect x="1899.32" y="688.60" width="7" height="6.50" fill="#dc143c" stroke="#b8203a" stroke-width="0.6"/><line x1="1913.49" y1="673.2" x2="1913.49" y2="698.3" stroke="#6f8572" stroke-width="1.25"/><rect x="1909.99" y="687.80" width="7" height="6.80" fill="#008a0e" stroke="#1a6a1a" stroke-width="0.6"/><line x1="1924.16" y1="683.7" x2="1924.16" y2="714.5" stroke="#a07880" stroke-width="1.25"/><rect x="1920.66" y="689.70" width="7" height="23.60" fill="#dc143c" stroke="#b8203a" stroke-width="0.6"/><line x1="1934.83" y1="697.5" x2="1934.83" y2="721.4" stroke="#6f8572" stroke-width="1.25"/><rect x="1931.33" y="713.70" width="7" height="1.60" fill="#008a0e" stroke="#1a6a1a" stroke-width="0.6"/><line x1="1945.50" y1="711.2" x2="1945.50" y2="736.6" stroke="#a07880" stroke-width="1.25"/><rect x="1942.00" y="712.40" width="7" height="24.20" fill="#dc143c" stroke="#b8203a" stroke-width="0.6"/><line x1="1956.18" y1="711.2" x2="1956.18" y2="743.6" stroke="#6f8572" stroke-width="1.25"/><rect x="1952.68" y="715.30" width="7" height="21.30" fill="#008a0e" stroke="#1a6a1a" stroke-width="0.6"/><line x1="1966.85" y1="712.0" x2="1966.85" y2="748.4" stroke="#a07880" stroke-width="1.25"/><rect x="1963.35" y="716.90" width="7" height="2.00" fill="#dc143c" stroke="#b8203a" stroke-width="0.6"/><line x1="1977.52" y1="687.0" x2="1977.52" y2="725.8" stroke="#6f8572" stroke-width="1.25"/><rect x="1974.02" y="704.00" width="7" height="15.80" fill="#008a0e" stroke="#1a6a1a" stroke-width="0.6"/><line x1="1988.19" y1="687.8" x2="1988.19" y2="726.6" stroke="#a07880" stroke-width="1.25"/><rect x="1984.69" y="703.20" width="7" height="2.10" fill="#dc143c" stroke="#b8203a" stroke-width="0.6"/><line x1="1998.86" y1="691.8" x2="1998.86" y2="717.7" stroke="#6f8572" stroke-width="1.25"/><rect x="1995.36" y="697.20" width="7" height="20.50" fill="#008a0e" stroke="#1a6a1a" stroke-width="0.6"/><line x1="2009.53" y1="677.3" x2="2009.53" y2="712.9" stroke="#a07880" stroke-width="1.25"/><rect x="2006.03" y="700.70" width="7" height="7.30" fill="#dc143c" stroke="#b8203a" stroke-width="0.6"/><line x1="2020.20" y1="709.1" x2="2020.20" y2="757.7" stroke="#a07880" stroke-width="1.25"/><rect x="2016.70" y="710.40" width="7" height="43.40" fill="#dc143c" stroke="#b8203a" stroke-width="0.6"/><line x1="2030.87" y1="729.0" x2="2030.87" y2="763.8" stroke="#6f8572" stroke-width="1.25"/><rect x="2027.37" y="745.20" width="7" height="9.70" fill="#008a0e" stroke="#1a6a1a" stroke-width="0.6"/><line x1="2041.54" y1="688.1" x2="2041.54" y2="757.3" stroke="#6f8572" stroke-width="1.25"/><rect x="2038.04" y="721.00" width="7" height="32.30" fill="#008a0e" stroke="#1a6a1a" stroke-width="0.6"/><line x1="2052.21" y1="719.3" x2="2052.21" y2="740.4" stroke="#6f8572" stroke-width="1.25"/><rect x="2048.71" y="727.40" width="7" height="1.60" fill="#008a0e" stroke="#1a6a1a" stroke-width="0.6"/><line x1="2062.88" y1="703.6" x2="2062.88" y2="729.5" stroke="#6f8572" stroke-width="1.25"/><rect x="2059.38" y="722.60" width="7" height="6.90" fill="#008a0e" stroke="#1a6a1a" stroke-width="0.6"/><line x1="2073.55" y1="710.8" x2="2073.55" y2="740.9" stroke="#a07880" stroke-width="1.25"/><rect x="2070.05" y="722.60" width="7" height="3.20" fill="#dc143c" stroke="#b8203a" stroke-width="0.6"/><line x1="2084.22" y1="696.7" x2="2084.22" y2="738.7" stroke="#6f8572" stroke-width="1.25"/><rect x="2080.72" y="704.00" width="7" height="22.60" fill="#008a0e" stroke="#1a6a1a" stroke-width="0.6"/><line x1="2094.89" y1="682.6" x2="2094.89" y2="725.8" stroke="#6f8572" stroke-width="1.25"/><rect x="2091.39" y="683.70" width="7" height="21.10" fill="#008a0e" stroke="#1a6a1a" stroke-width="0.6"/><line x1="2105.56" y1="681.3" x2="2105.56" y2="703.6" stroke="#6f8572" stroke-width="1.25"/><rect x="2102.06" y="697.20" width="7" height="1.60" fill="#008a0e" stroke="#1a6a1a" stroke-width="0.6"/><line x1="2116.23" y1="690.2" x2="2116.23" y2="716.1" stroke="#6f8572" stroke-width="1.25"/><rect x="2112.73" y="693.90" width="7" height="3.60" fill="#008a0e" stroke="#1a6a1a" stroke-width="0.6"/><line x1="2126.90" y1="662.7" x2="2126.90" y2="700.7" stroke="#6f8572" stroke-width="1.25"/><rect x="2123.40" y="683.30" width="7" height="8.50" fill="#008a0e" stroke="#1a6a1a" stroke-width="0.6"/><line x1="2137.57" y1="644.1" x2="2137.57" y2="690.2" stroke="#6f8572" stroke-width="1.25"/><rect x="2134.07" y="650.60" width="7" height="33.60" fill="#008a0e" stroke="#1a6a1a" stroke-width="0.6"/><line x1="2148.24" y1="646.5" x2="2148.24" y2="687.8" stroke="#a07880" stroke-width="1.25"/><rect x="2144.74" y="650.30" width="7" height="27.80" fill="#dc143c" stroke="#b8203a" stroke-width="0.6"/><line x1="2158.91" y1="676.8" x2="2158.91" y2="704.8" stroke="#a07880" stroke-width="1.25"/><rect x="2155.41" y="684.60" width="7" height="1.90" fill="#dc143c" stroke="#b8203a" stroke-width="0.6"/><line x1="2169.59" y1="661.1" x2="2169.59" y2="688.6" stroke="#6f8572" stroke-width="1.25"/><rect x="2166.09" y="669.20" width="7" height="17.80" fill="#008a0e" stroke="#1a6a1a" stroke-width="0.6"/><line x1="2180.26" y1="642.2" x2="2180.26" y2="673.2" stroke="#6f8572" stroke-width="1.25"/><rect x="2176.76" y="650.30" width="7" height="19.40" fill="#008a0e" stroke="#1a6a1a" stroke-width="0.6"/><line x1="2190.93" y1="639.3" x2="2190.93" y2="657.9" stroke="#6f8572" stroke-width="1.25"/><rect x="2187.43" y="648.20" width="7" height="5.30" fill="#008a0e" stroke="#1a6a1a" stroke-width="0.6"/><line x1="2201.60" y1="639.3" x2="2201.60" y2="667.1" stroke="#a07880" stroke-width="1.25"/><rect x="2198.10" y="648.60" width="7" height="2.80" fill="#dc143c" stroke="#b8203a" stroke-width="0.6"/><line x1="2212.27" y1="644.9" x2="2212.27" y2="661.9" stroke="#a07880" stroke-width="1.25"/><rect x="2208.77" y="651.40" width="7" height="2.40" fill="#dc143c" stroke="#b8203a" stroke-width="0.6"/><line x1="2222.94" y1="633.6" x2="2222.94" y2="669.2" stroke="#6f8572" stroke-width="1.25"/><rect x="2219.44" y="646.50" width="7" height="10.20" fill="#008a0e" stroke="#1a6a1a" stroke-width="0.6"/><line x1="2233.61" y1="602.9" x2="2233.61" y2="648.2" stroke="#6f8572" stroke-width="1.25"/><rect x="2230.11" y="623.10" width="7" height="25.10" fill="#008a0e" stroke="#1a6a1a" stroke-width="0.6"/><line x1="2244.28" y1="619.0" x2="2244.28" y2="648.6" stroke="#a07880" stroke-width="1.25"/><rect x="2240.78" y="623.90" width="7" height="24.70" fill="#dc143c" stroke="#b8203a" stroke-width="0.6"/><line x1="2254.95" y1="632.0" x2="2254.95" y2="658.7" stroke="#6f8572" stroke-width="1.25"/><rect x="2251.45" y="632.00" width="7" height="18.90" fill="#008a0e" stroke="#1a6a1a" stroke-width="0.6"/><line x1="2265.62" y1="615.8" x2="2265.62" y2="650.3" stroke="#a07880" stroke-width="1.25"/><rect x="2262.12" y="638.50" width="7" height="6.90" fill="#dc143c" stroke="#b8203a" stroke-width="0.6"/><line x1="2276.29" y1="626.3" x2="2276.29" y2="660.0" stroke="#6f8572" stroke-width="1.25"/><rect x="2272.79" y="638.50" width="7" height="8.00" fill="#008a0e" stroke="#1a6a1a" stroke-width="0.6"/><line x1="2286.96" y1="622.3" x2="2286.96" y2="654.6" stroke="#6f8572" stroke-width="1.25"/><rect x="2283.46" y="625.50" width="7" height="15.10" fill="#008a0e" stroke="#1a6a1a" stroke-width="0.6"/><line x1="2297.63" y1="622.3" x2="2297.63" y2="680.5" stroke="#a07880" stroke-width="1.25"/><rect x="2294.13" y="628.30" width="7" height="52.20" fill="#dc143c" stroke="#b8203a" stroke-width="0.6"/><line x1="2308.30" y1="656.2" x2="2308.30" y2="684.6" stroke="#6f8572" stroke-width="1.25"/><rect x="2304.80" y="660.30" width="7" height="21.80" fill="#008a0e" stroke="#1a6a1a" stroke-width="0.6"/><line x1="2318.97" y1="621.5" x2="2318.97" y2="671.3" stroke="#6f8572" stroke-width="1.25"/><rect x="2315.47" y="631.70" width="7" height="39.60" fill="#008a0e" stroke="#1a6a1a" stroke-width="0.6"/><line x1="2329.64" y1="632.5" x2="2329.64" y2="660.3" stroke="#a07880" stroke-width="1.25"/><rect x="2326.14" y="632.50" width="7" height="18.10" fill="#dc143c" stroke="#b8203a" stroke-width="0.6"/><line x1="2340.31" y1="645.7" x2="2340.31" y2="692.6" stroke="#a07880" stroke-width="1.25"/><rect x="2336.81" y="650.90" width="7" height="19.90" fill="#dc143c" stroke="#b8203a" stroke-width="0.6"/><line x1="2350.98" y1="647.8" x2="2350.98" y2="721.3" stroke="#a07880" stroke-width="1.25"/><rect x="2347.48" y="672.00" width="7" height="44.90" fill="#dc143c" stroke="#b8203a" stroke-width="0.6"/><line x1="2361.65" y1="700.0" x2="2361.65" y2="724.3" stroke="#6f8572" stroke-width="1.25"/><rect x="2358.15" y="706.20" width="7" height="10.70" fill="#008a0e" stroke="#1a6a1a" stroke-width="0.6"/><line x1="2372.32" y1="687.9" x2="2372.32" y2="712.9" stroke="#6f8572" stroke-width="1.25"/><rect x="2368.82" y="696.30" width="7" height="16.60" fill="#008a0e" stroke="#1a6a1a" stroke-width="0.6"/><line x1="2383.00" y1="675.0" x2="2383.00" y2="698.5" stroke="#6f8572" stroke-width="1.25"/><rect x="2379.50" y="687.10" width="7" height="11.40" fill="#008a0e" stroke="#1a6a1a" stroke-width="0.6"/><line x1="2393.67" y1="676.2" x2="2393.67" y2="716.2" stroke="#a07880" stroke-width="1.25"/><rect x="2390.17" y="686.50" width="7" height="23.50" fill="#dc143c" stroke="#b8203a" stroke-width="0.6"/><line x1="2404.34" y1="689.0" x2="2404.34" y2="721.3" stroke="#6f8572" stroke-width="1.25"/><rect x="2400.84" y="701.20" width="7" height="8.40" fill="#008a0e" stroke="#1a6a1a" stroke-width="0.6"/><line x1="2415.01" y1="668.8" x2="2415.01" y2="703.7" stroke="#6f8572" stroke-width="1.25"/><rect x="2411.51" y="690.40" width="7" height="13.30" fill="#008a0e" stroke="#1a6a1a" stroke-width="0.6"/><line x1="2425.68" y1="691.2" x2="2425.68" y2="719.9" stroke="#a07880" stroke-width="1.25"/><rect x="2422.18" y="695.30" width="7" height="1.60" fill="#dc143c" stroke="#b8203a" stroke-width="0.6"/><line x1="2436.35" y1="689.7" x2="2436.35" y2="714.0" stroke="#a07880" stroke-width="1.25"/><rect x="2432.85" y="696.30" width="7" height="10.70" fill="#dc143c" stroke="#b8203a" stroke-width="0.6"/><line x1="2447.02" y1="680.9" x2="2447.02" y2="716.2" stroke="#6f8572" stroke-width="1.25"/><rect x="2443.52" y="690.40" width="7" height="17.70" fill="#008a0e" stroke="#1a6a1a" stroke-width="0.6"/><line x1="2457.69" y1="674.3" x2="2457.69" y2="703.7" stroke="#6f8572" stroke-width="1.25"/><rect x="2454.19" y="677.90" width="7" height="12.50" fill="#008a0e" stroke="#1a6a1a" stroke-width="0.6"/><line x1="2468.36" y1="666.9" x2="2468.36" y2="708.1" stroke="#a07880" stroke-width="1.25"/><rect x="2464.86" y="680.90" width="7" height="19.80" fill="#dc143c" stroke="#b8203a" stroke-width="0.6"/><line x1="2479.03" y1="673.5" x2="2479.03" y2="707.4" stroke="#6f8572" stroke-width="1.25"/><rect x="2475.53" y="694.10" width="7" height="13.30" fill="#008a0e" stroke="#1a6a1a" stroke-width="0.6"/><line x1="2489.70" y1="688.2" x2="2489.70" y2="702.9" stroke="#a07880" stroke-width="1.25"/><rect x="2486.20" y="694.90" width="7" height="1.60" fill="#dc143c" stroke="#b8203a" stroke-width="0.6"/></g><g fill="#ffffff" stroke="#444" stroke-width="1"><rect x="1625.5" y="752.5" width="11" height="16"/><rect x="1636" y="752.5" width="11" height="16"/><rect x="1646.5" y="752.5" width="11" height="16"/><rect x="1657.5" y="752.5" width="11" height="16"/><path d="M1668 752.5 H1697 L1699.5 759.5 L1697 766.5 H1668 Z"/></g><text x="1627" y="765" font-size="10" fill="#333" clip-path="url(#evc1627)">18</text><defs><clipPath id="evc1627"><rect x="1626" y="753" width="9.5" height="15"/></clipPath></defs><text x="1637.5" y="765" font-size="10" fill="#333" clip-path="url(#evc1637)">18</text><defs><clipPath id="evc1637"><rect x="1636.5" y="753" width="9.5" height="15"/></clipPath></defs><text x="1648" y="765" font-size="10" fill="#333" clip-path="url(#evc1648)">22</text><defs><clipPath id="evc1648"><rect x="1647" y="753" width="9.5" height="15"/></clipPath></defs><text x="1659" y="765" font-size="10" fill="#333" clip-path="url(#evc1659)">18</text><defs><clipPath id="evc1659"><rect x="1658" y="753" width="9.5" height="15"/></clipPath></defs><text x="1669" y="765" font-size="10.5" fill="#333" text-anchor="start" font-weight="normal" >22:30</text><line x1="356" y1="769.8" x2="2502" y2="769.8" stroke="#7a7a7a" stroke-width="2.4" /><line x1="2501.5" y1="102" x2="2501.5" y2="1104" stroke="#555" stroke-width="1.2" /><line x1="2501" y1="126.4" x2="2505" y2="126.4" stroke="#555" stroke-width="1" /><text x="2505.5" y="131.2" font-size="12" fill="#4a4a4a" text-anchor="start" font-weight="normal" letter-spacing="-0.45" >1.01160</text><line x1="2501" y1="169.2" x2="2505" y2="169.2" stroke="#555" stroke-width="1" /><text x="2505.5" y="174.0" font-size="12" fill="#4a4a4a" text-anchor="start" font-weight="normal" letter-spacing="-0.45" >1.00290</text><line x1="2501" y1="212.0" x2="2505" y2="212.0" stroke="#555" stroke-width="1" /><text x="2505.5" y="216.8" font-size="12" fill="#4a4a4a" text-anchor="start" font-weight="normal" letter-spacing="-0.45" >0.99420</text><line x1="2501" y1="254.79999999999998" x2="2505" y2="254.79999999999998" stroke="#555" stroke-width="1" /><text x="2505.5" y="259.6" font-size="12" fill="#4a4a4a" text-anchor="start" font-weight="normal" letter-spacing="-0.45" >0.98550</text><line x1="2501" y1="297.6" x2="2505" y2="297.6" stroke="#555" stroke-width="1" /><text x="2505.5" y="302.4" font-size="12" fill="#4a4a4a" text-anchor="start" font-weight="normal" letter-spacing="-0.45" >0.97680</text><line x1="2501" y1="340.4" x2="2505" y2="340.4" stroke="#555" stroke-width="1" /><text x="2505.5" y="345.2" font-size="12" fill="#4a4a4a" text-anchor="start" font-weight="normal" letter-spacing="-0.45" >0.96810</text><line x1="2501" y1="383.19999999999993" x2="2505" y2="383.19999999999993" stroke="#555" stroke-width="1" /><text x="2505.5" y="388.0" font-size="12" fill="#4a4a4a" text-anchor="start" font-weight="normal" letter-spacing="-0.45" >0.95940</text><line x1="2501" y1="426.0" x2="2505" y2="426.0" stroke="#555" stroke-width="1" /><text x="2505.5" y="430.8" font-size="12" fill="#4a4a4a" text-anchor="start" font-weight="normal" letter-spacing="-0.45" >0.95070</text><line x1="2501" y1="468.79999999999995" x2="2505" y2="468.79999999999995" stroke="#555" stroke-width="1" /><text x="2505.5" y="473.6" font-size="12" fill="#4a4a4a" text-anchor="start" font-weight="normal" letter-spacing="-0.45" >0.94200</text><line x1="2501" y1="511.6" x2="2505" y2="511.6" stroke="#555" stroke-width="1" /><text x="2505.5" y="516.4" font-size="12" fill="#4a4a4a" text-anchor="start" font-weight="normal" letter-spacing="-0.45" >0.93330</text><line x1="2501" y1="554.4" x2="2505" y2="554.4" stroke="#555" stroke-width="1" /><text x="2505.5" y="559.2" font-size="12" fill="#4a4a4a" text-anchor="start" font-weight="normal" letter-spacing="-0.45" >0.92460</text><line x1="2501" y1="597.1999999999999" x2="2505" y2="597.1999999999999" stroke="#555" stroke-width="1" /><text x="2505.5" y="602.0" font-size="12" fill="#4a4a4a" text-anchor="start" font-weight="normal" letter-spacing="-0.45" >0.91590</text><line x1="2501" y1="639.9999999999999" x2="2505" y2="639.9999999999999" stroke="#555" stroke-width="1" /><text x="2505.5" y="644.8" font-size="12" fill="#4a4a4a" text-anchor="start" font-weight="normal" letter-spacing="-0.45" >0.90720</text><line x1="2501" y1="682.8" x2="2505" y2="682.8" stroke="#555" stroke-width="1" /><text x="2505.5" y="687.6" font-size="12" fill="#4a4a4a" text-anchor="start" font-weight="normal" letter-spacing="-0.45" >0.89850</text><line x1="2501" y1="725.5999999999999" x2="2505" y2="725.5999999999999" stroke="#555" stroke-width="1" /><text x="2505.5" y="730.4" font-size="12" fill="#4a4a4a" text-anchor="start" font-weight="normal" letter-spacing="-0.45" >0.88980</text><rect x="2502.5" y="688.5" width="47" height="13" fill="#7d8d9c" /><text x="2505.5" y="699.3" font-size="12" fill="#dde6ee" text-anchor="start" font-weight="normal" letter-spacing="-0.45" >0.89595</text><g clip-path="url(#indclip)" fill="none" stroke-linejoin="round"><defs><clipPath id="indclip"><rect x="356" y="771" width="2145" height="332"/></clipPath></defs><polyline points="355.6,1041.2 366.3,1047.5 376.9,1019.5 387.6,1027.5 398.3,1033.8 409.0,1045.5 419.6,1030.0 430.3,1037.5 441.0,1043.8 451.6,1050.0 462.3,1055.8 473.0,1060.8 483.6,1065.0 494.3,1069.5 505.0,1074.2 515.7,1063.8 526.3,1036.8 537.0,1043.2 547.7,1049.5 558.3,1055.8 569.0,1047.0 579.7,1049.2 590.4,996.2 601.0,998.8 611.7,1011.2 622.4,1022.0 633.0,1003.8 643.7,1015.5 654.4,1025.5 665.0,1009.5 675.7,977.5 686.4,958.8 697.1,940.0 707.7,912.5 718.4,878.8 729.1,906.2 739.7,902.5 750.4,925.0 761.1,948.8 771.7,971.2 782.4,985.0 793.1,978.8 803.8,932.5 814.4,923.8 825.1,943.8 835.8,955.0 846.4,967.5 857.1,970.0 867.8,933.8 878.5,928.2 889.1,950.0 899.8,968.8 910.5,968.8 921.1,967.5 931.8,950.5 942.5,970.0 953.1,943.8 963.8,948.0 974.5,965.0 985.2,982.5 995.8,998.8 1006.5,963.8 1017.2,973.8 1027.8,988.8 1038.5,1005.0 1049.2,1000.0 1059.9,982.5 1070.5,963.8 1081.2,970.0 1091.9,985.0 1102.5,1000.0 1113.2,1012.5 1123.9,1022.5 1134.5,1033.8 1145.2,972.5 1155.9,986.2 1166.6,1000.0 1177.2,1014.5 1187.9,1012.5 1198.6,983.8 1209.2,970.0 1219.9,940.0 1230.6,956.2 1241.3,975.0 1251.9,990.0 1262.6,1006.2 1273.3,997.5 1283.9,995.0 1294.6,1008.8 1305.3,1018.8 1315.9,1030.0 1326.6,983.8 1337.3,988.8 1348.0,1003.8 1358.6,1016.2 1369.3,1001.2 1380.0,987.5 1390.6,983.2 1401.3,997.5 1412.0,1003.8 1422.7,973.8 1433.3,985.5 1444.0,1002.5 1454.7,1014.5 1465.3,988.8 1476.0,1001.2 1486.7,1013.0 1497.3,1025.0 1508.0,1033.8 1518.7,1041.2 1529.4,1047.0 1540.0,1052.5 1550.7,1058.8 1561.4,1044.5 1572.0,992.0 1582.7,1003.8 1593.4,1016.2 1604.0,973.8 1614.7,920.0 1625.4,887.0 1636.1,912.5 1646.7,936.2 1657.4,958.8 1668.1,977.0 1678.7,992.5 1689.4,984.5 1700.1,951.2 1710.8,936.2 1721.4,955.0 1732.1,972.0 1742.8,990.0 1753.4,1003.8 1764.1,975.5 1774.8,977.5 1785.4,993.8 1796.1,961.2 1806.8,921.2 1817.5,937.5 1828.1,957.5 1838.8,977.5 1849.5,996.2 1860.1,940.0 1870.8,906.2 1881.5,927.0 1892.2,948.8 1902.8,968.8 1913.5,987.5 1924.2,961.2 1934.8,957.0 1945.5,930.0 1956.2,934.7 1966.8,947.0 1977.5,963.0 1988.2,978.4 1998.9,992.6 2009.5,1006.2 2020.2,952.7 2030.9,957.3 2041.5,973.3 2052.2,988.7 2062.9,1004.7 2073.6,991.3 2084.2,1004.7 2094.9,1017.6 2105.6,1027.3 2116.2,1002.9 2126.9,1014.5 2137.6,1024.8 2148.2,1034.5 2158.9,997.7 2169.6,1009.3 2180.3,1020.9 2190.9,1032.0 2201.6,1015.8 2212.3,1026.0 2222.9,1036.3 2233.6,1044.8 2244.3,1049.2 2254.9,1031.2 2265.6,1038.9 2276.3,1024.8 2287.0,1033.8 2297.6,1006.7 2308.3,1005.5 2319.0,1017.6 2329.6,1027.8 2340.3,983.1 2351.0,969.4 2361.7,975.9 2372.3,991.3 2383.0,1004.7 2393.7,990.8 2404.3,987.4 2415.0,1001.1 2425.7,976.4 2436.3,991.8 2447.0,1006.7 2457.7,1019.1 2468.4,1030.4 2479.0,1038.9 2489.7,1044.8" stroke="#e8dbbd" stroke-width="1.8"/><polyline points="355.6,942.5 366.3,966.2 376.9,985.0 387.6,996.2 398.3,998.0 409.0,964.5 419.6,980.8 430.3,996.8 441.0,995.8 451.6,966.2 462.3,934.5 473.0,948.0 483.6,967.5 494.3,938.8 505.0,958.8 515.7,976.2 526.3,992.0 537.0,959.2 547.7,970.0 558.3,955.5 569.0,972.5 579.7,990.0 590.4,1002.5 601.0,1016.2 611.7,981.2 622.4,949.5 633.0,967.5 643.7,972.5 654.4,933.8 665.0,955.0 675.7,973.8 686.4,990.0 697.1,1003.8 707.7,1016.2 718.4,1027.5 729.1,1036.2 739.7,1043.2 750.4,1050.0 761.1,1003.0 771.7,1014.5 782.4,971.2 793.1,985.0 803.8,999.5 814.4,1013.0 825.1,973.0 835.8,988.8 846.4,961.2 857.1,978.8 867.8,995.0 878.5,1008.8 889.1,1018.8 899.8,1008.8 910.5,1020.0 921.1,1030.0 931.8,1038.8 942.5,1046.2 953.1,1052.5 963.8,1058.0 974.5,1046.2 985.2,1031.2 995.8,1033.8 1006.5,1041.2 1017.2,1048.0 1027.8,1028.8 1038.5,1010.0 1049.2,1020.0 1059.9,1031.2 1070.5,1040.0 1081.2,1047.5 1091.9,1051.2 1102.5,998.8 1113.2,1011.2 1123.9,1015.0 1134.5,1009.5 1145.2,1020.0 1155.9,1030.0 1166.6,991.2 1177.2,983.8 1187.9,997.5 1198.6,1010.0 1209.2,1021.2 1219.9,1031.2 1230.6,1040.0 1241.3,1011.2 1251.9,1016.2 1262.6,993.2 1273.3,1007.5 1283.9,1018.8 1294.6,1011.2 1305.3,1006.2 1315.9,1000.0 1326.6,1011.2 1337.3,1023.8 1348.0,966.2 1358.6,957.5 1369.3,975.0 1380.0,991.2 1390.6,1005.0 1401.3,984.5 1412.0,996.2 1422.7,1010.5 1433.3,988.0 1444.0,990.0 1454.7,954.5 1465.3,972.0 1476.0,961.2 1486.7,935.0 1497.3,920.0 1508.0,887.0 1518.7,898.8 1529.4,925.0 1540.0,942.5 1550.7,949.5 1561.4,967.5 1572.0,985.5 1582.7,972.0 1593.4,967.0 1604.0,983.8 1614.7,1000.0 1625.4,1012.5 1636.1,1022.5 1646.7,973.8 1657.4,987.5 1668.1,1000.5 1678.7,1001.2 1689.4,1013.8 1700.1,1023.8 1710.8,1033.0 1721.4,998.0 1732.1,1010.0 1742.8,1001.2 1753.4,1012.0 1764.1,1023.8 1774.8,1033.8 1785.4,1025.0 1796.1,1032.5 1806.8,1040.5 1817.5,1048.8 1828.1,1045.5 1838.8,1021.2 1849.5,1030.5 1860.1,1038.0 1870.8,1045.5 1881.5,1053.2 1892.2,1021.2 1902.8,1030.0 1913.5,1015.5 1924.2,1024.5 1934.8,1034.5 1945.5,1043.0 1956.2,1046.6 1966.8,1055.1 1977.5,1011.9 1988.2,1022.2 1998.9,1032.5 2009.5,1010.6 2020.2,1020.9 2030.9,1032.0 2041.5,995.9 2052.2,1008.0 2062.9,977.2 2073.6,990.8 2084.2,977.9 2094.9,969.4 2105.6,985.6 2116.2,999.5 2126.9,958.4 2137.6,946.3 2148.2,965.6 2158.9,983.1 2169.6,955.3 2180.3,927.0 2190.9,937.3 2201.6,957.3 2212.3,974.6 2222.9,967.6 2233.6,933.4 2244.3,954.0 2254.9,973.3 2265.6,958.4 2276.3,975.9 2287.0,982.3 2297.6,995.2 2308.3,1009.3 2319.0,968.7 2329.6,983.6 2340.3,998.5 2351.0,1011.9 2361.7,1023.5 2372.3,995.2 2383.0,970.2 2393.7,984.9 2404.3,1000.3 2415.0,972.0 2425.7,987.4 2436.3,998.5 2447.0,992.6 2457.7,987.4 2468.4,988.7 2479.0,1002.9 2489.7,1014.5" stroke="#9dbf58" stroke-width="2.1"/><polyline points="355.6,919.5 366.3,908.0 376.9,917.5 387.6,925.5 398.3,928.0 409.0,916.8 419.6,920.0 430.3,923.0 441.0,920.0 451.6,907.0 462.3,883.8 473.0,865.0 483.6,846.2 494.3,823.8 505.0,803.8 515.7,799.2 526.3,817.5 537.0,820.8 547.7,822.0 558.3,815.5 569.0,819.5 579.7,826.2 590.4,857.5 601.0,882.5 611.7,900.0 622.4,901.8 633.0,914.2 643.7,922.5 654.4,915.0 665.0,920.8 675.7,941.2 686.4,953.8 697.1,954.2 707.7,942.5 718.4,926.2 729.1,908.8 739.7,891.2 750.4,872.5 761.1,884.5 771.7,896.2 782.4,917.5 793.1,938.8 803.8,940.0 814.4,933.8 825.1,947.5 835.8,956.2 846.4,970.0 857.1,984.5 867.8,982.5 878.5,973.8 889.1,966.2 899.8,968.8 910.5,967.5 921.1,960.0 931.8,945.0 942.5,931.2 953.1,910.0 963.8,888.8 974.5,882.5 985.2,891.2 995.8,900.0 1006.5,893.8 1017.2,887.5 1027.8,898.8 1038.5,921.2 1049.2,935.8 1059.9,937.0 1070.5,927.5 1081.2,917.5 1091.9,908.0 1102.5,930.0 1113.2,952.5 1123.9,966.2 1134.5,971.2 1145.2,968.8 1155.9,967.5 1166.6,980.0 1177.2,983.8 1187.9,990.0 1198.6,993.8 1209.2,987.5 1219.9,971.2 1230.6,955.0 1241.3,961.2 1251.9,970.0 1262.6,981.2 1273.3,991.2 1283.9,996.2 1294.6,1007.5 1305.3,1012.5 1315.9,1010.0 1326.6,1010.0 1337.3,1006.2 1348.0,1005.0 1358.6,997.5 1369.3,1002.5 1380.0,1012.5 1390.6,1016.2 1401.3,1022.5 1412.0,1028.8 1422.7,1023.8 1433.3,1032.0 1444.0,1035.5 1454.7,1022.5 1465.3,1026.2 1476.0,1021.2 1486.7,1007.5 1497.3,987.5 1508.0,962.5 1518.7,936.2 1529.4,915.0 1540.0,895.0 1550.7,873.8 1561.4,871.2 1572.0,898.8 1582.7,912.5 1593.4,920.0 1604.0,940.0 1614.7,938.8 1625.4,927.5 1636.1,917.5 1646.7,930.0 1657.4,942.5 1668.1,955.0 1678.7,971.2 1689.4,977.5 1700.1,965.0 1710.8,950.5 1721.4,956.2 1732.1,962.5 1742.8,976.2 1753.4,987.0 1764.1,981.2 1774.8,973.8 1785.4,976.2 1796.1,963.8 1806.8,937.5 1817.5,918.8 1828.1,909.2 1838.8,917.5 1849.5,926.2 1860.1,914.5 1870.8,892.5 1881.5,875.5 1892.2,880.0 1902.8,885.5 1913.5,902.5 1924.2,905.0 1934.8,900.5 1945.5,883.8 1956.2,872.9 1966.8,858.8 1977.5,872.9 1988.2,885.8 1998.9,897.4 2009.5,923.9 2020.2,921.8 2030.9,917.2 2041.5,933.4 2052.2,948.8 2062.9,957.9 2073.6,975.9 2084.2,982.3 2094.9,979.7 2105.6,977.2 2116.2,991.8 2126.9,984.9 2137.6,973.3 2148.2,961.7 2158.9,973.3 2169.6,970.7 2180.3,957.3 2190.9,943.7 2201.6,942.9 2212.3,942.9 2222.9,936.0 2233.6,919.8 2244.3,903.0 2254.9,905.1 2265.6,898.7 2276.3,905.1 2287.0,909.0 2297.6,929.0 2308.3,948.8 2319.0,949.6 2329.6,951.4 2340.3,964.3 2351.0,966.1 2361.7,965.1 2372.3,979.7 2383.0,983.1 2393.7,996.5 2404.3,1004.7 2415.0,1006.7 2425.7,1014.5 2436.3,1021.7 2447.0,1026.8 2457.7,1023.5 2468.4,1015.8 2479.0,1008.8 2489.7,1002.9" stroke="#36a2a0" stroke-width="2.2"/></g><text x="358" y="783" font-size="11" fill="#3a3a3a" text-anchor="start" font-weight="normal" textLength="124.10" lengthAdjust="spacingAndGlyphs" >ADX(14) 16.06 14.13 8.88</text><line x1="2501" y1="776" x2="2505" y2="776" stroke="#555" stroke-width="1" /><text x="2505.5" y="781" font-size="12" fill="#4a4a4a" text-anchor="start" font-weight="normal" letter-spacing="-0.45" >57.02</text><line x1="2501" y1="1097" x2="2505" y2="1097" stroke="#555" stroke-width="1" /><text x="2505.5" y="1101" font-size="12" fill="#4a4a4a" text-anchor="start" font-weight="normal" letter-spacing="-0.45" >-1.41</text><line x1="356" y1="1103.6" x2="2502" y2="1103.6" stroke="#555" stroke-width="1.2" /><text x="355.1" y="1116.2" font-size="11.6" fill="#4a4a4a" text-anchor="start" font-weight="normal" letter-spacing="-0.4" >26 Sep 2022</text><line x1="441.0" y1="1103.5" x2="441.0" y2="1107.5" stroke="#555" stroke-width="1" /><text x="440.5" y="1116.2" font-size="11.6" fill="#4a4a4a" text-anchor="start" font-weight="normal" letter-spacing="-0.4" >6 Oct 2022</text><line x1="526.3" y1="1103.5" x2="526.3" y2="1107.5" stroke="#555" stroke-width="1" /><text x="525.8" y="1116.2" font-size="11.6" fill="#4a4a4a" text-anchor="start" font-weight="normal" letter-spacing="-0.4" >18 Oct 2022</text><line x1="611.7" y1="1103.5" x2="611.7" y2="1107.5" stroke="#555" stroke-width="1" /><text x="611.2" y="1116.2" font-size="11.6" fill="#4a4a4a" text-anchor="start" font-weight="normal" letter-spacing="-0.4" >28 Oct 2022</text><line x1="697.1" y1="1103.5" x2="697.1" y2="1107.5" stroke="#555" stroke-width="1" /><text x="696.6" y="1116.2" font-size="11.6" fill="#4a4a4a" text-anchor="start" font-weight="normal" letter-spacing="-0.4" >9 Nov 2022</text><line x1="782.4" y1="1103.5" x2="782.4" y2="1107.5" stroke="#555" stroke-width="1" /><text x="781.9" y="1116.2" font-size="11.6" fill="#4a4a4a" text-anchor="start" font-weight="normal" letter-spacing="-0.4" >21 Nov 2022</text><line x1="867.8" y1="1103.5" x2="867.8" y2="1107.5" stroke="#555" stroke-width="1" /><text x="867.3" y="1116.2" font-size="11.6" fill="#4a4a4a" text-anchor="start" font-weight="normal" letter-spacing="-0.4" >1 Dec 2022</text><line x1="953.1" y1="1103.5" x2="953.1" y2="1107.5" stroke="#555" stroke-width="1" /><text x="952.6" y="1116.2" font-size="11.6" fill="#4a4a4a" text-anchor="start" font-weight="normal" letter-spacing="-0.4" >13 Dec 2022</text><line x1="1038.5" y1="1103.5" x2="1038.5" y2="1107.5" stroke="#555" stroke-width="1" /><text x="1038.0" y="1116.2" font-size="11.6" fill="#4a4a4a" text-anchor="start" font-weight="normal" letter-spacing="-0.4" >23 Dec 2022</text><line x1="1123.9" y1="1103.5" x2="1123.9" y2="1107.5" stroke="#555" stroke-width="1" /><text x="1123.4" y="1116.2" font-size="11.6" fill="#4a4a4a" text-anchor="start" font-weight="normal" letter-spacing="-0.4" >5 Jan 2023</text><line x1="1209.2" y1="1103.5" x2="1209.2" y2="1107.5" stroke="#555" stroke-width="1" /><text x="1208.7" y="1116.2" font-size="11.6" fill="#4a4a4a" text-anchor="start" font-weight="normal" letter-spacing="-0.4" >17 Jan 2023</text><line x1="1294.6" y1="1103.5" x2="1294.6" y2="1107.5" stroke="#555" stroke-width="1" /><text x="1294.1" y="1116.2" font-size="11.6" fill="#4a4a4a" text-anchor="start" font-weight="normal" letter-spacing="-0.4" >27 Jan 2023</text><line x1="1380.0" y1="1103.5" x2="1380.0" y2="1107.5" stroke="#555" stroke-width="1" /><text x="1379.5" y="1116.2" font-size="11.6" fill="#4a4a4a" text-anchor="start" font-weight="normal" letter-spacing="-0.4" >8 Feb 2023</text><line x1="1465.3" y1="1103.5" x2="1465.3" y2="1107.5" stroke="#555" stroke-width="1" /><text x="1464.8" y="1116.2" font-size="11.6" fill="#4a4a4a" text-anchor="start" font-weight="normal" letter-spacing="-0.4" >20 Feb 2023</text><line x1="1550.7" y1="1103.5" x2="1550.7" y2="1107.5" stroke="#555" stroke-width="1" /><text x="1550.2" y="1116.2" font-size="11.6" fill="#4a4a4a" text-anchor="start" font-weight="normal" letter-spacing="-0.4" >2 Mar 2023</text><line x1="1636.1" y1="1103.5" x2="1636.1" y2="1107.5" stroke="#555" stroke-width="1" /><text x="1635.6" y="1116.2" font-size="11.6" fill="#4a4a4a" text-anchor="start" font-weight="normal" letter-spacing="-0.4" >14 Mar 2023</text><line x1="1721.4" y1="1103.5" x2="1721.4" y2="1107.5" stroke="#555" stroke-width="1" /><text x="1720.9" y="1116.2" font-size="11.6" fill="#4a4a4a" text-anchor="start" font-weight="normal" letter-spacing="-0.4" >24 Mar 2023</text><line x1="1806.8" y1="1103.5" x2="1806.8" y2="1107.5" stroke="#555" stroke-width="1" /><text x="1806.3" y="1116.2" font-size="11.6" fill="#4a4a4a" text-anchor="start" font-weight="normal" letter-spacing="-0.4" >5 Apr 2023</text><line x1="1892.2" y1="1103.5" x2="1892.2" y2="1107.5" stroke="#555" stroke-width="1" /><text x="1891.7" y="1116.2" font-size="11.6" fill="#4a4a4a" text-anchor="start" font-weight="normal" letter-spacing="-0.4" >17 Apr 2023</text><line x1="1977.5" y1="1103.5" x2="1977.5" y2="1107.5" stroke="#555" stroke-width="1" /><text x="1977.0" y="1116.2" font-size="11.6" fill="#4a4a4a" text-anchor="start" font-weight="normal" letter-spacing="-0.4" >27 Apr 2023</text><line x1="2062.9" y1="1103.5" x2="2062.9" y2="1107.5" stroke="#555" stroke-width="1" /><text x="2062.4" y="1116.2" font-size="11.6" fill="#4a4a4a" text-anchor="start" font-weight="normal" letter-spacing="-0.4" >9 May 2023</text><line x1="2148.2" y1="1103.5" x2="2148.2" y2="1107.5" stroke="#555" stroke-width="1" /><text x="2147.7" y="1116.2" font-size="11.6" fill="#4a4a4a" text-anchor="start" font-weight="normal" letter-spacing="-0.4" >19 May 2023</text><line x1="2233.6" y1="1103.5" x2="2233.6" y2="1107.5" stroke="#555" stroke-width="1" /><text x="2233.1" y="1116.2" font-size="11.6" fill="#4a4a4a" text-anchor="start" font-weight="normal" letter-spacing="-0.4" >31 May 2023</text><line x1="2319.0" y1="1103.5" x2="2319.0" y2="1107.5" stroke="#555" stroke-width="1" /><text x="2318.5" y="1116.2" font-size="11.6" fill="#4a4a4a" text-anchor="start" font-weight="normal" letter-spacing="-0.4" >12 Jun 2023</text><line x1="2404.3" y1="1103.5" x2="2404.3" y2="1107.5" stroke="#555" stroke-width="1" /><text x="2403.8" y="1116.2" font-size="11.6" fill="#4a4a4a" text-anchor="start" font-weight="normal" letter-spacing="-0.4" >22 Jun 2023</text><line x1="2489.7" y1="1103.5" x2="2489.7" y2="1107.5" stroke="#555" stroke-width="1" /><text x="2489.2" y="1116.2" font-size="11.6" fill="#4a4a4a" text-anchor="start" font-weight="normal" letter-spacing="-0.4" >4 Jul 2023</text><line x1="353" y1="1124.3" x2="481.5" y2="1124.3" stroke="#5a5a5a" stroke-width="1.3" /><line x1="593.5" y1="1124.3" x2="2560" y2="1124.3" stroke="#5a5a5a" stroke-width="1.3" /><rect x="353" y="1124.5" width="2207" height="22" fill="#f0f0f0" /><rect x="481.5" y="1122" width="112" height="24.5" fill="#ffffff" /><text x="368" y="1141" font-size="13.5" fill="#7a7a7a" text-anchor="start" font-weight="normal" textLength="100.05" lengthAdjust="spacingAndGlyphs" >EURUSD,Weekly</text><text x="494" y="1141" font-size="13.5" fill="#1e1e1e" text-anchor="start" font-weight="normal" textLength="84.53" lengthAdjust="spacingAndGlyphs" >USDCHF,Daily</text><text x="606.7" y="1141" font-size="13.5" fill="#7a7a7a" text-anchor="start" font-weight="normal" textLength="74.50" lengthAdjust="spacingAndGlyphs" >GBPUSD,H1</text><text x="705.6" y="1141" font-size="13.5" fill="#7a7a7a" text-anchor="start" font-weight="normal" textLength="81.44" lengthAdjust="spacingAndGlyphs" >USDJPY,Daily</text><text x="813.4" y="1141" font-size="13.5" fill="#7a7a7a" text-anchor="start" font-weight="normal" textLength="60.94" lengthAdjust="spacingAndGlyphs" >US500,M1</text><text x="902" y="1141" font-size="13.5" fill="#7a7a7a" text-anchor="start" font-weight="normal" textLength="82.40" lengthAdjust="spacingAndGlyphs" >XAUUSD,M15</text><text x="1012" y="1141" font-size="13.5" fill="#7a7a7a" text-anchor="start" font-weight="normal" textLength="92.89" lengthAdjust="spacingAndGlyphs" >XTIUSD,Weekly</text><text x="1133" y="1141" font-size="13.5" fill="#7a7a7a" text-anchor="start" font-weight="normal" textLength="108.66" lengthAdjust="spacingAndGlyphs" >NFLX.NAS,Weekly</text><text x="1271" y="1141" font-size="13.5" fill="#7a7a7a" text-anchor="start" font-weight="normal" textLength="77.88" lengthAdjust="spacingAndGlyphs" >DE40,Weekly</text><text x="1376.6" y="1141" font-size="13.5" fill="#7a7a7a" text-anchor="start" font-weight="normal" textLength="83.11" lengthAdjust="spacingAndGlyphs" >XAGUSD,M30</text><text x="1487.5" y="1141" font-size="13.5" fill="#7a7a7a" text-anchor="start" font-weight="normal" textLength="87.68" lengthAdjust="spacingAndGlyphs" >ALLY.NYSE,H4</text><text x="1602.5" y="1141" font-size="13.5" fill="#7a7a7a" text-anchor="start" font-weight="normal" textLength="80.28" lengthAdjust="spacingAndGlyphs" >DXY_M3,M30</text><text x="1711.8" y="1141" font-size="13.5" fill="#7a7a7a" text-anchor="start" font-weight="normal" textLength="83.11" lengthAdjust="spacingAndGlyphs" >AAPL.NAS,H1</text><text x="1822.7" y="1141" font-size="13.5" fill="#7a7a7a" text-anchor="start" font-weight="normal" textLength="78.09" lengthAdjust="spacingAndGlyphs" >VRA.NAS,M1</text><line x1="693" y1="1125.5" x2="693" y2="1145.5" stroke="#a8a8a8" stroke-width="1" /><line x1="800.5" y1="1125.5" x2="800.5" y2="1145.5" stroke="#a8a8a8" stroke-width="1" /><line x1="889.6" y1="1125.5" x2="889.6" y2="1145.5" stroke="#a8a8a8" stroke-width="1" /><line x1="999" y1="1125.5" x2="999" y2="1145.5" stroke="#a8a8a8" stroke-width="1" /><line x1="1120" y1="1125.5" x2="1120" y2="1145.5" stroke="#a8a8a8" stroke-width="1" /><line x1="1257" y1="1125.5" x2="1257" y2="1145.5" stroke="#a8a8a8" stroke-width="1" /><line x1="1363.7" y1="1125.5" x2="1363.7" y2="1145.5" stroke="#a8a8a8" stroke-width="1" /><line x1="1474.6" y1="1125.5" x2="1474.6" y2="1145.5" stroke="#a8a8a8" stroke-width="1" /><line x1="1589.6" y1="1125.5" x2="1589.6" y2="1145.5" stroke="#a8a8a8" stroke-width="1" /><line x1="1699" y1="1125.5" x2="1699" y2="1145.5" stroke="#a8a8a8" stroke-width="1" /><line x1="1809.8" y1="1125.5" x2="1809.8" y2="1145.5" stroke="#a8a8a8" stroke-width="1" /><path d="M2525 1134 L2521 1137 L2525 1140 Z" fill="#b0b0b0"/><path d="M2545 1134 L2549 1137 L2545 1140 Z" fill="#b0b0b0"/><line x1="353" y1="1146.5" x2="2560" y2="1146.5" stroke="#dcdcdc" stroke-width="1" /><path d="M481.5 1124 V1146.5 H593.5 V1124" fill="none" stroke="#555" stroke-width="1.2"/><line x1="353.5" y1="1118" x2="353.5" y2="1146.5" stroke="#5a5a5a" stroke-width="1.2" /><line x1="0" y1="1151.8" x2="2560" y2="1151.8" stroke="#c4c4c4" stroke-width="1" /><rect x="18" y="1152.5" width="2518" height="149" fill="#ffffff" /><defs><linearGradient id="tbg" x1="0" y1="0" x2="0" y2="1"><stop offset="0" stop-color="#bcd6f0"/><stop offset="1" stop-color="#9dc0e4"/></linearGradient></defs><rect x="2" y="1169" width="15" height="158" fill="url(#tbg)" /><g stroke="#111" stroke-width="1.5"><line x1="7" y1="1157" x2="13" y2="1163"/><line x1="13" y1="1157" x2="7" y2="1163"/></g><text transform="translate(14.8,1325) rotate(-90)" font-size="13.5" fill="#1a2a3a" style="font-weight:normal">Toolbox</text><text x="23.5" y="1172" font-size="13.5" fill="#222" text-anchor="start" font-weight="normal" >Subject</text><text x="1281" y="1172" font-size="13.5" fill="#222" text-anchor="start" font-weight="normal" >From</text><text x="1784" y="1172" font-size="13.5" fill="#222" text-anchor="start" font-weight="normal" >To</text><text x="2531" y="1172" font-size="13.5" fill="#222" text-anchor="end" font-weight="normal" >Time</text><defs><clipPath id="tbclip"><rect x="18" y="1153" width="2518" height="148.5"/></clipPath></defs><g clip-path="url(#tbclip)"><g><path d="M44 1188.0 L52 1182.5 L60 1188.0 V1197.0 H44 Z" fill="#e2e2e2" stroke="#b8b8b8" stroke-width="1.2" stroke-linejoin="round"/><path d="M44 1188.0 L52 1193.0 L60 1188.0" fill="none" stroke="#b8b8b8" stroke-width="1.2"/></g><text x="66" y="1196.0" font-size="14" fill="#333" text-anchor="start" font-weight="normal" >Risiko-Warnung</text><text x="1281" y="1196.0" font-size="14" fill="#333" text-anchor="start" font-weight="normal" >Trading Platform</text><text x="2531" y="1196.0" font-size="14" fill="#333" text-anchor="end" font-weight="normal" >2022.12.10 00:05</text><rect x="18" y="1200.67" width="2518" height="22.67" fill="#ebebeb" /><line x1="18" y1="1201.17" x2="2536" y2="1201.17" stroke="#dedede" stroke-width="1" /><g><rect x="44.5" y="1206.67" width="15" height="11.5" rx="2" fill="#f8cc14" stroke="#d09a00" stroke-width="1.1"/><path d="M45.5 1208.67 L52 1212.67 L58.5 1208.67" fill="none" stroke="#c89000" stroke-width="1"/></g><text x="66" y="1218.67" font-size="14" fill="#111" text-anchor="start" font-weight="bold" >Integriertes Virtual Hosting — Handelsroboter und Signale funktionieren jetzt 24/7</text><text x="1281" y="1218.67" font-size="14" fill="#111" text-anchor="start" font-weight="bold" >Trading Platform</text><text x="2531" y="1218.67" font-size="14" fill="#111" text-anchor="end" font-weight="bold" >2022.12.10 00:05</text><line x1="18" y1="1223.84" x2="2536" y2="1223.84" stroke="#dedede" stroke-width="1" /><g><rect x="44.5" y="1229.34" width="15" height="11.5" rx="2" fill="#f8cc14" stroke="#d09a00" stroke-width="1.1"/><path d="M45.5 1231.34 L52 1235.34 L58.5 1231.34" fill="none" stroke="#c89000" stroke-width="1"/></g><text x="66" y="1241.34" font-size="14" fill="#111" text-anchor="start" font-weight="bold" >Beauftragen Sie einen &quot;Freelancer&quot;, Ihnen Handelsroboter zu erstellen — es ist schnell und effizient</text><text x="1281" y="1241.34" font-size="14" fill="#111" text-anchor="start" font-weight="bold" >Trading Platform</text><text x="2531" y="1241.34" font-size="14" fill="#111" text-anchor="end" font-weight="bold" >2022.12.10 00:05</text><rect x="18" y="1246.01" width="2518" height="22.67" fill="#ebebeb" /><line x1="18" y1="1246.51" x2="2536" y2="1246.51" stroke="#dedede" stroke-width="1" /><g><rect x="44.5" y="1252.01" width="15" height="11.5" rx="2" fill="#f8cc14" stroke="#d09a00" stroke-width="1.1"/><path d="M45.5 1254.01 L52 1258.01 L58.5 1254.01" fill="none" stroke="#c89000" stroke-width="1"/></g><text x="66" y="1264.01" font-size="14" fill="#111" text-anchor="start" font-weight="bold" >Mobiler Handel — Handel von überall, zu jeder Zeit!</text><text x="1281" y="1264.01" font-size="14" fill="#111" text-anchor="start" font-weight="bold" >Trading Platform</text><text x="2531" y="1264.01" font-size="14" fill="#111" text-anchor="end" font-weight="bold" >2022.12.10 00:05</text><line x1="18" y1="1269.18" x2="2536" y2="1269.18" stroke="#dedede" stroke-width="1" /><g><rect x="44.5" y="1274.68" width="15" height="11.5" rx="2" fill="#f8cc14" stroke="#d09a00" stroke-width="1.1"/><path d="M45.5 1276.68 L52 1280.68 L58.5 1276.68" fill="none" stroke="#c89000" stroke-width="1"/></g><text x="66" y="1286.68" font-size="14" fill="#111" text-anchor="start" font-weight="bold" >Kaufen Sie fertige Roboter und Indikatoren aus dem Market</text><text x="1281" y="1286.68" font-size="14" fill="#111" text-anchor="start" font-weight="bold" >Trading Platform</text><text x="2531" y="1286.68" font-size="14" fill="#111" text-anchor="end" font-weight="bold" >2022.12.10 00:05</text><rect x="18" y="1291.35" width="2518" height="22.67" fill="#ebebeb" /><line x1="18" y1="1291.85" x2="2536" y2="1291.85" stroke="#dedede" stroke-width="1" /><g><rect x="44.5" y="1297.35" width="15" height="11.5" rx="2" fill="#f8cc14" stroke="#d09a00" stroke-width="1.1"/><path d="M45.5 1299.35 L52 1303.35 L58.5 1299.35" fill="none" stroke="#c89000" stroke-width="1"/></g><text x="66" y="1309.35" font-size="14" fill="#111" text-anchor="start" font-weight="bold" >Handel in sehr und Kopieren der Handel</text><text x="1281" y="1309.35" font-size="14" fill="#111" text-anchor="start" font-weight="bold" >Trading Platform</text><text x="2531" y="1309.35" font-size="14" fill="#111" text-anchor="end" font-weight="bold" >2022.12.10 00:05</text></g><line x1="1276.5" y1="1153" x2="1276.5" y2="1301" stroke="#e8e8e8" stroke-width="1" /><line x1="1779.5" y1="1153" x2="1779.5" y2="1301" stroke="#e8e8e8" stroke-width="1" /><line x1="2359.5" y1="1153" x2="2359.5" y2="1301" stroke="#e8e8e8" stroke-width="1" /><rect x="2536" y="1153" width="19" height="148" fill="#f0f0f0" /><rect x="2541" y="1174" width="10" height="67" fill="#8a8a8a" /><line x1="18" y1="1301.8" x2="298.5" y2="1301.8" stroke="#666" stroke-width="1.2" /><line x1="380.5" y1="1301.8" x2="2536" y2="1301.8" stroke="#666" stroke-width="1.2" /><rect x="299" y="1301" width="81" height="24" fill="#ffffff" /><path d="M298.5 1302 V1325.5 H380.5 V1302" fill="#ffffff" stroke="#555" stroke-width="1"/><text x="33" y="1318.8" font-size="13.5" fill="#808080" text-anchor="start" font-weight="normal" >Trade</text><text x="91" y="1318.8" font-size="13.5" fill="#808080" text-anchor="start" font-weight="normal" >Exposure</text><text x="170" y="1318.8" font-size="13.5" fill="#808080" text-anchor="start" font-weight="normal" >History</text><text x="237" y="1318.8" font-size="13.5" fill="#808080" text-anchor="start" font-weight="normal" >News</text><text x="392" y="1318.8" font-size="13.5" fill="#808080" text-anchor="start" font-weight="normal" >Calendar</text><text x="470" y="1318.8" font-size="13.5" fill="#808080" text-anchor="start" font-weight="normal" >Company</text><text x="553" y="1318.8" font-size="13.5" fill="#808080" text-anchor="start" font-weight="normal" >Alerts</text><text x="611" y="1318.8" font-size="13.5" fill="#808080" text-anchor="start" font-weight="normal" >Articles</text><text x="680" y="1318.8" font-size="13.5" fill="#808080" text-anchor="start" font-weight="normal" >Code Base</text><text x="767.6" y="1318.8" font-size="13.5" fill="#808080" text-anchor="start" font-weight="normal" >Experts</text><text x="836" y="1318.8" font-size="13.5" fill="#808080" text-anchor="start" font-weight="normal" >Journal</text><text x="310" y="1318.8" font-size="13.5" fill="#1e1e1e" text-anchor="start" font-weight="normal" >Mailbox</text><text x="273.5" y="1322" font-size="10.5" fill="#d0202a" text-anchor="start" font-weight="bold" >99</text><text x="362" y="1323" font-size="10.5" fill="#d0202a" text-anchor="start" font-weight="bold" >7</text><line x1="79.5" y1="1304.5" x2="79.5" y2="1324" stroke="#b8b8b8" stroke-width="1" /><line x1="159.5" y1="1304.5" x2="159.5" y2="1324" stroke="#b8b8b8" stroke-width="1" /><line x1="225.5" y1="1304.5" x2="225.5" y2="1324" stroke="#b8b8b8" stroke-width="1" /><line x1="459.5" y1="1304.5" x2="459.5" y2="1324" stroke="#b8b8b8" stroke-width="1" /><line x1="540.5" y1="1304.5" x2="540.5" y2="1324" stroke="#b8b8b8" stroke-width="1" /><line x1="599.5" y1="1304.5" x2="599.5" y2="1324" stroke="#b8b8b8" stroke-width="1" /><line x1="667.5" y1="1304.5" x2="667.5" y2="1324" stroke="#b8b8b8" stroke-width="1" /><line x1="755.5" y1="1304.5" x2="755.5" y2="1324" stroke="#b8b8b8" stroke-width="1" /><line x1="824.5" y1="1304.5" x2="824.5" y2="1324" stroke="#b8b8b8" stroke-width="1" /><g><path d="M2283 1314 H2295 L2296 1325 H2282 Z" fill="#f6c417" stroke="#d9a400" stroke-width="1"/><path d="M2286 1314 V1312 Q2289 1307 2292 1312 V1314" fill="none" stroke="#c89400" stroke-width="1.3"/></g><text x="2302" y="1322" font-size="14" fill="#222" text-anchor="start" font-weight="normal" >Market</text><g fill="none" stroke="#3d6f97" stroke-width="1.4"><circle cx="2364.5" cy="1317" r="2" fill="#3d6f97"/><path d="M2360.5 1313 Q2358.5 1317 2360.5 1321"/><path d="M2368.5 1313 Q2370.5 1317 2368.5 1321"/><path d="M2357.5 1311 Q2354.5 1317 2357.5 1323"/><path d="M2371.5 1311 Q2374.5 1317 2371.5 1323"/></g><text x="2378.5" y="1322" font-size="14" fill="#222" text-anchor="start" font-weight="normal" >Signals</text><g fill="#b9def5" stroke="#3d6f97" stroke-width="1.3"><path d="M2437 1319 Q2434 1319 2434.5 1316 Q2435 1313.5 2438 1314 Q2439 1309.5 2443.5 1310 Q2448 1310.5 2448.5 1314.5 Q2451 1315 2450.5 1317.5 Q2450 1319 2448 1319 Z"/><path d="M2442.5 1319 V1323 M2435 1323.5 H2450" fill="none"/></g><text x="2456" y="1322" font-size="14" fill="#222" text-anchor="start" font-weight="normal" >VPS</text><g fill="#d8f5d8" stroke="#3fb24a" stroke-width="1.3"><path d="M2499 1308.5 L2502 1311 L2506 1310.5 L2506.5 1314.5 L2509 1317.5 L2506.5 1320.5 L2506 1324.5 L2502 1324 L2499 1326.5 L2496 1324 L2492 1324.5 L2491.5 1320.5 L2489 1317.5 L2491.5 1314.5 L2492 1310.5 L2496 1311 Z"/><path d="M2495 1317.5 L2498 1320.5 L2503.5 1314.5" fill="none"/></g><text x="2512.5" y="1322" font-size="14" fill="#222" text-anchor="start" font-weight="normal" >Tester</text><line x1="0" y1="1331" x2="2560" y2="1331" stroke="#d4d4d4" stroke-width="1" /><text x="2" y="1352" font-size="14" fill="#222" text-anchor="start" font-weight="normal" >Market Watch</text><line x1="1750.5" y1="1334" x2="1750.5" y2="1358" stroke="#d0d0d0" stroke-width="1" /><line x1="1905" y1="1334" x2="1905" y2="1358" stroke="#d0d0d0" stroke-width="1" /><line x1="2020" y1="1334" x2="2020" y2="1358" stroke="#d0d0d0" stroke-width="1" /><line x1="2102.6" y1="1334" x2="2102.6" y2="1358" stroke="#d0d0d0" stroke-width="1" /><line x1="2185" y1="1334" x2="2185" y2="1358" stroke="#d0d0d0" stroke-width="1" /><line x1="2263.5" y1="1334" x2="2263.5" y2="1358" stroke="#d0d0d0" stroke-width="1" /><line x1="2345" y1="1334" x2="2345" y2="1358" stroke="#d0d0d0" stroke-width="1" /><line x1="2422.5" y1="1334" x2="2422.5" y2="1358" stroke="#d0d0d0" stroke-width="1" /><text x="1755.6" y="1352" font-size="14" fill="#222" text-anchor="start" font-weight="normal" >Default</text><g stroke="#3fb24a" stroke-width="2"><line x1="2430" y1="1352" x2="2430" y2="1350"/><line x1="2433.5" y1="1352" x2="2433.5" y2="1348"/><line x1="2437" y1="1352" x2="2437" y2="1346"/><line x1="2440.5" y1="1352" x2="2440.5" y2="1343"/><line x1="2444" y1="1352" x2="2444" y2="1340"/></g><text x="2451.5" y="1352" font-size="14" fill="#222" text-anchor="start" font-weight="normal" >93.51 ms</text><rect x="0" y="1358" width="2560" height="2" fill="#5a5a5a" /></svg></body></html>
